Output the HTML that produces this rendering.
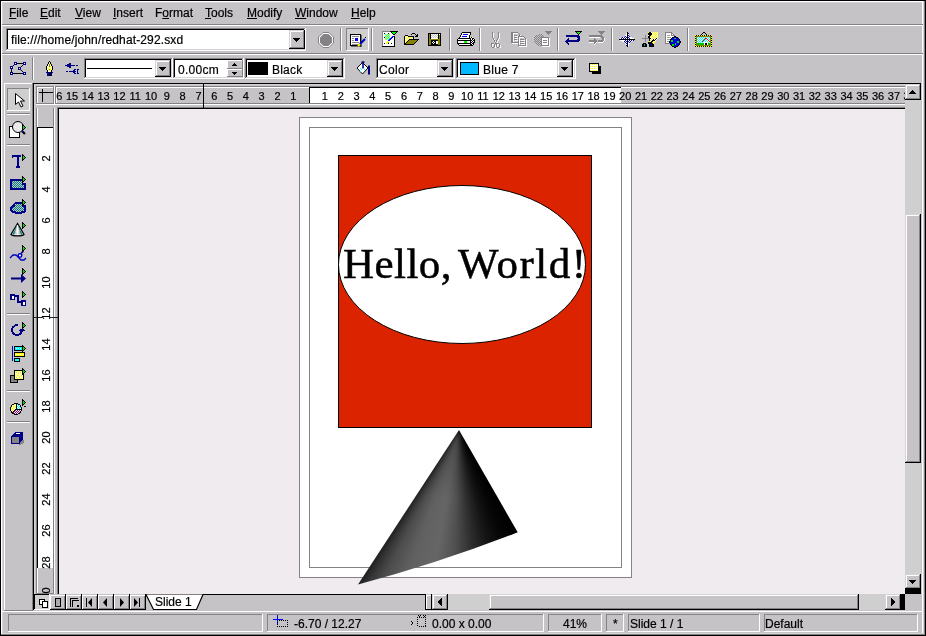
<!DOCTYPE html>
<html><head><meta charset="utf-8">
<style>
*{margin:0;padding:0;box-sizing:border-box}
html,body{width:926px;height:636px;overflow:hidden;background:#c6c3c6}
body{position:relative;font-family:"Liberation Sans",sans-serif;font-size:12px;color:#000}
.a{position:absolute}
.t{position:absolute;white-space:pre;line-height:1;-webkit-text-stroke:0.2px #000}
u{text-decoration:underline;text-underline-offset:1px}
</style></head><body><div class="a" style="left:0;top:0;width:926px;height:636px;will-change:transform">
<div class="a" style="left:0px;top:0px;width:926px;height:636px;background:#c6c3c6;"></div>
<div class="a" style="left:0px;top:0px;width:926px;height:1px;background:#000000;"></div>
<div class="a" style="left:0px;top:0px;width:1px;height:636px;background:#000000;"></div>
<div class="a" style="left:925px;top:0px;width:1px;height:636px;background:#000000;"></div>
<div class="a" style="left:0px;top:635px;width:926px;height:1px;background:#000000;"></div>
<div class="a" style="left:1px;top:1px;width:924px;height:1px;background:#ffffff;"></div>
<div class="a" style="left:1px;top:1px;width:1px;height:634px;background:#ffffff;"></div>
<div class="a" style="left:2px;top:2px;width:921px;height:1px;background:#d6d3d6;"></div>
<div class="a" style="left:2px;top:2px;width:1px;height:631px;background:#d6d3d6;"></div>
<div class="a" style="left:922px;top:2px;width:1px;height:632px;background:#ffffff;"></div>
<div class="a" style="left:923px;top:1px;width:1px;height:634px;background:#d6d3d6;"></div>
<div class="a" style="left:924px;top:1px;width:1px;height:634px;background:#848284;"></div>
<div class="a" style="left:2px;top:633px;width:922px;height:1px;background:#d6d3d6;"></div>
<div class="a" style="left:1px;top:634px;width:924px;height:1px;background:#848284;"></div>
<div class="t" style="left:9px;top:7px;font-size:12px;font-family:'Liberation Sans',sans-serif;"><u>F</u>ile</div>
<div class="t" style="left:40px;top:7px;font-size:12px;font-family:'Liberation Sans',sans-serif;"><u>E</u>dit</div>
<div class="t" style="left:75px;top:7px;font-size:12px;font-family:'Liberation Sans',sans-serif;"><u>V</u>iew</div>
<div class="t" style="left:113px;top:7px;font-size:12px;font-family:'Liberation Sans',sans-serif;"><u>I</u>nsert</div>
<div class="t" style="left:155px;top:7px;font-size:12px;font-family:'Liberation Sans',sans-serif;">F<u>o</u>rmat</div>
<div class="t" style="left:205px;top:7px;font-size:12px;font-family:'Liberation Sans',sans-serif;"><u>T</u>ools</div>
<div class="t" style="left:247px;top:7px;font-size:12px;font-family:'Liberation Sans',sans-serif;"><u>M</u>odify</div>
<div class="t" style="left:295px;top:7px;font-size:12px;font-family:'Liberation Sans',sans-serif;"><u>W</u>indow</div>
<div class="t" style="left:351px;top:7px;font-size:12px;font-family:'Liberation Sans',sans-serif;"><u>H</u>elp</div>
<div class="a" style="left:2px;top:24px;width:921px;height:1px;background:#848284;"></div>
<div class="a" style="left:2px;top:25px;width:921px;height:1px;background:#ffffff;"></div>
<div class="a" style="left:6px;top:28px;width:300px;height:23px;background:#ffffff;"></div>
<div class="a" style="left:6px;top:28px;width:300px;height:1px;background:#848284;"></div>
<div class="a" style="left:6px;top:28px;width:1px;height:23px;background:#848284;"></div>
<div class="a" style="left:6px;top:50px;width:300px;height:1px;background:#ffffff;"></div>
<div class="a" style="left:305px;top:28px;width:1px;height:23px;background:#ffffff;"></div>
<div class="a" style="left:7px;top:29px;width:298px;height:1px;background:#000000;"></div>
<div class="a" style="left:7px;top:29px;width:1px;height:21px;background:#000000;"></div>
<div class="a" style="left:7px;top:49px;width:298px;height:1px;background:#d6d3d6;"></div>
<div class="a" style="left:304px;top:29px;width:1px;height:21px;background:#d6d3d6;"></div>
<div class="t" style="left:11px;top:34px;font-size:12px;font-family:'Liberation Sans',sans-serif;letter-spacing:0.13px">file:///home/john/redhat-292.sxd</div>
<div class="a" style="left:289px;top:30px;width:16px;height:19px;background:#c6c3c6;"></div>
<div class="a" style="left:289px;top:30px;width:16px;height:1px;background:#d6d3d6;"></div>
<div class="a" style="left:289px;top:30px;width:1px;height:19px;background:#d6d3d6;"></div>
<div class="a" style="left:289px;top:48px;width:16px;height:1px;background:#000000;"></div>
<div class="a" style="left:304px;top:30px;width:1px;height:19px;background:#000000;"></div>
<div class="a" style="left:290px;top:31px;width:14px;height:1px;background:#ffffff;"></div>
<div class="a" style="left:290px;top:31px;width:1px;height:17px;background:#ffffff;"></div>
<div class="a" style="left:290px;top:47px;width:14px;height:1px;background:#848284;"></div>
<div class="a" style="left:303px;top:31px;width:1px;height:17px;background:#848284;"></div>
<svg class="a" style="left:293px;top:38px;" width="7" height="4" viewBox="0 0 7 4" shape-rendering="crispEdges"><path d="M0 0h7v1h-1v1h-1v1h-1v1h-1v-1h-1v-1h-1v-1h-1z" fill="#000000"/></svg>
<svg class="a" style="left:318px;top:32px;shape-rendering:auto" width="16" height="16" viewBox="0 0 16 16" shape-rendering="crispEdges"><path d="M5 0.5h6l4.5 4.5v6l-4.5 4.5h-6l-4.5-4.5v-6z" fill="#fff" stroke="#848284"/><path d="M5.5 2h5l3.5 3.5v5l-3.5 3.5h-5l-3.5-3.5v-5z" fill="#848284"/></svg>
<div class="a" style="left:340px;top:28px;width:1px;height:23px;background:#848284;"></div>
<div class="a" style="left:341px;top:28px;width:1px;height:23px;background:#ffffff;"></div>
<div class="a" style="left:346px;top:28px;width:23px;height:23px;background:#cecfce;"></div>
<div class="a" style="left:346px;top:28px;width:23px;height:1px;background:#848284;"></div>
<div class="a" style="left:346px;top:28px;width:1px;height:23px;background:#848284;"></div>
<div class="a" style="left:346px;top:50px;width:23px;height:1px;background:#ffffff;"></div>
<div class="a" style="left:368px;top:28px;width:1px;height:23px;background:#ffffff;"></div>
<svg class="a" style="left:350px;top:34px;shape-rendering:auto" width="17" height="13" viewBox="0 0 17 13" shape-rendering="crispEdges"><rect x="0.5" y="0.5" width="10" height="11" fill="#fff" stroke="#000"/><path d="M11 1v12H1" stroke="#000" fill="none"/><path d="M2 2.5h7M2 4.5h2M2 6.5h2M2 8.5h7M2 10.5h7" stroke="#848284"/><rect x="5" y="4" width="3" height="3" fill="#00f"/><path d="M9 11l6-6" stroke="#00c" stroke-width="2.2"/><path d="M8 12l2-2" stroke="#ff0" stroke-width="2"/><path d="M15 3l1 1" stroke="#000"/></svg>
<div class="a" style="left:371px;top:28px;width:1px;height:23px;background:#848284;"></div>
<div class="a" style="left:372px;top:28px;width:1px;height:23px;background:#ffffff;"></div>
<svg class="a" style="left:382px;top:31px;" width="16" height="16" viewBox="0 0 16 16" shape-rendering="crispEdges"><rect x="0" y="0" width="8" height="1" fill="#848284"/><rect x="8" y="0" width="8" height="1" fill="#000"/><rect x="0" y="1" width="1" height="1" fill="#848284"/><rect x="1" y="1" width="8" height="1" fill="#fff"/><rect x="9" y="1" width="1" height="1" fill="#000"/><rect x="10" y="1" width="4" height="1" fill="#00ff00"/><rect x="14" y="1" width="1" height="1" fill="#000"/><rect x="0" y="2" width="1" height="1" fill="#848284"/><rect x="1" y="2" width="1" height="1" fill="#fff"/><rect x="2" y="2" width="1" height="1" fill="#000"/><rect x="3" y="2" width="3" height="1" fill="#fff"/><rect x="6" y="2" width="1" height="1" fill="#000"/><rect x="7" y="2" width="3" height="1" fill="#fff"/><rect x="10" y="2" width="1" height="1" fill="#000"/><rect x="11" y="2" width="2" height="1" fill="#00ff00"/><rect x="13" y="2" width="1" height="1" fill="#000"/><rect x="0" y="3" width="1" height="1" fill="#848284"/><rect x="1" y="3" width="2" height="1" fill="#fff"/><rect x="3" y="3" width="1" height="1" fill="#00ffff"/><rect x="4" y="3" width="1" height="1" fill="#ffff00"/><rect x="5" y="3" width="1" height="1" fill="#00ffff"/><rect x="6" y="3" width="1" height="1" fill="#ffff00"/><rect x="7" y="3" width="1" height="1" fill="#00ffff"/><rect x="8" y="3" width="3" height="1" fill="#fff"/><rect x="11" y="3" width="2" height="1" fill="#000"/><rect x="0" y="4" width="1" height="1" fill="#848284"/><rect x="1" y="4" width="2" height="1" fill="#fff"/><rect x="3" y="4" width="1" height="1" fill="#ffff00"/><rect x="4" y="4" width="1" height="1" fill="#00ffff"/><rect x="5" y="4" width="1" height="1" fill="#ffff00"/><rect x="6" y="4" width="1" height="1" fill="#00ffff"/><rect x="7" y="4" width="1" height="1" fill="#ffff00"/><rect x="8" y="4" width="4" height="1" fill="#fff"/><rect x="0" y="5" width="1" height="1" fill="#848284"/><rect x="1" y="5" width="2" height="1" fill="#fff"/><rect x="3" y="5" width="1" height="1" fill="#00ffff"/><rect x="4" y="5" width="1" height="1" fill="#ffff00"/><rect x="5" y="5" width="1" height="1" fill="#00ffff"/><rect x="6" y="5" width="1" height="1" fill="#ffff00"/><rect x="7" y="5" width="1" height="1" fill="#00ffff"/><rect x="8" y="5" width="2" height="1" fill="#fff"/><rect x="10" y="5" width="2" height="1" fill="#0000ff"/><rect x="12" y="5" width="1" height="1" fill="#000"/><rect x="0" y="6" width="1" height="1" fill="#848284"/><rect x="1" y="6" width="1" height="1" fill="#fff"/><rect x="2" y="6" width="1" height="1" fill="#000"/><rect x="3" y="6" width="1" height="1" fill="#ffff00"/><rect x="4" y="6" width="1" height="1" fill="#00ffff"/><rect x="5" y="6" width="1" height="1" fill="#ffff00"/><rect x="6" y="6" width="1" height="1" fill="#00ffff"/><rect x="7" y="6" width="1" height="1" fill="#ffff00"/><rect x="8" y="6" width="1" height="1" fill="#fff"/><rect x="9" y="6" width="2" height="1" fill="#0000ff"/><rect x="11" y="6" width="1" height="1" fill="#fff"/><rect x="12" y="6" width="1" height="1" fill="#000"/><rect x="0" y="7" width="1" height="1" fill="#848284"/><rect x="1" y="7" width="2" height="1" fill="#fff"/><rect x="3" y="7" width="1" height="1" fill="#00ffff"/><rect x="4" y="7" width="1" height="1" fill="#ffff00"/><rect x="5" y="7" width="1" height="1" fill="#00ffff"/><rect x="6" y="7" width="1" height="1" fill="#ffff00"/><rect x="7" y="7" width="1" height="1" fill="#00ffff"/><rect x="8" y="7" width="2" height="1" fill="#0000ff"/><rect x="10" y="7" width="2" height="1" fill="#fff"/><rect x="12" y="7" width="1" height="1" fill="#000"/><rect x="0" y="8" width="1" height="1" fill="#848284"/><rect x="1" y="8" width="2" height="1" fill="#fff"/><rect x="3" y="8" width="1" height="1" fill="#ffff00"/><rect x="4" y="8" width="1" height="1" fill="#00ffff"/><rect x="5" y="8" width="1" height="1" fill="#ffff00"/><rect x="6" y="8" width="1" height="1" fill="#00ffff"/><rect x="7" y="8" width="2" height="1" fill="#0000ff"/><rect x="9" y="8" width="3" height="1" fill="#fff"/><rect x="12" y="8" width="1" height="1" fill="#000"/><rect x="0" y="9" width="1" height="1" fill="#848284"/><rect x="1" y="9" width="5" height="1" fill="#fff"/><rect x="6" y="9" width="2" height="1" fill="#0000ff"/><rect x="8" y="9" width="4" height="1" fill="#fff"/><rect x="12" y="9" width="1" height="1" fill="#000"/><rect x="0" y="10" width="1" height="1" fill="#848284"/><rect x="1" y="10" width="4" height="1" fill="#fff"/><rect x="5" y="10" width="2" height="1" fill="#ffff00"/><rect x="7" y="10" width="5" height="1" fill="#fff"/><rect x="12" y="10" width="1" height="1" fill="#000"/><rect x="0" y="11" width="1" height="1" fill="#848284"/><rect x="1" y="11" width="3" height="1" fill="#fff"/><rect x="4" y="11" width="2" height="1" fill="#ffff00"/><rect x="6" y="11" width="1" height="1" fill="#00ff00"/><rect x="7" y="11" width="5" height="1" fill="#fff"/><rect x="12" y="11" width="1" height="1" fill="#000"/><rect x="0" y="12" width="1" height="1" fill="#848284"/><rect x="1" y="12" width="1" height="1" fill="#fff"/><rect x="2" y="12" width="1" height="1" fill="#000"/><rect x="3" y="12" width="1" height="1" fill="#fff"/><rect x="4" y="12" width="1" height="1" fill="#ffff00"/><rect x="5" y="12" width="1" height="1" fill="#fff"/><rect x="6" y="12" width="1" height="1" fill="#000"/><rect x="7" y="12" width="2" height="1" fill="#fff"/><rect x="9" y="12" width="1" height="1" fill="#000"/><rect x="10" y="12" width="2" height="1" fill="#fff"/><rect x="12" y="12" width="1" height="1" fill="#000"/><rect x="0" y="13" width="1" height="1" fill="#848284"/><rect x="1" y="13" width="11" height="1" fill="#fff"/><rect x="12" y="13" width="1" height="1" fill="#000"/><rect x="0" y="14" width="1" height="1" fill="#848284"/><rect x="1" y="14" width="11" height="1" fill="#fff"/><rect x="12" y="14" width="1" height="1" fill="#000"/><rect x="0" y="15" width="13" height="1" fill="#000"/></svg>
<svg class="a" style="left:402px;top:33px;" width="17" height="12" viewBox="0 0 17 12" shape-rendering="crispEdges"><rect x="10" y="0" width="3" height="1" fill="#000"/><rect x="9" y="1" width="1" height="1" fill="#000"/><rect x="13" y="1" width="1" height="1" fill="#000"/><rect x="15" y="1" width="1" height="1" fill="#000"/><rect x="3" y="2" width="3" height="1" fill="#000"/><rect x="14" y="2" width="2" height="1" fill="#000"/><rect x="2" y="3" width="1" height="1" fill="#000"/><rect x="3" y="3" width="1" height="1" fill="#ffff00"/><rect x="4" y="3" width="1" height="1" fill="#fff"/><rect x="5" y="3" width="1" height="1" fill="#ffff00"/><rect x="6" y="3" width="6" height="1" fill="#000"/><rect x="13" y="3" width="3" height="1" fill="#000"/><rect x="2" y="4" width="1" height="1" fill="#000"/><rect x="3" y="4" width="1" height="1" fill="#fff"/><rect x="4" y="4" width="1" height="1" fill="#ffff00"/><rect x="5" y="4" width="1" height="1" fill="#fff"/><rect x="6" y="4" width="1" height="1" fill="#ffff00"/><rect x="7" y="4" width="1" height="1" fill="#fff"/><rect x="8" y="4" width="1" height="1" fill="#ffff00"/><rect x="9" y="4" width="1" height="1" fill="#fff"/><rect x="10" y="4" width="1" height="1" fill="#ffff00"/><rect x="11" y="4" width="1" height="1" fill="#000"/><rect x="2" y="5" width="1" height="1" fill="#000"/><rect x="3" y="5" width="1" height="1" fill="#ffff00"/><rect x="4" y="5" width="1" height="1" fill="#fff"/><rect x="5" y="5" width="1" height="1" fill="#ffff00"/><rect x="6" y="5" width="1" height="1" fill="#fff"/><rect x="7" y="5" width="1" height="1" fill="#ffff00"/><rect x="8" y="5" width="1" height="1" fill="#fff"/><rect x="9" y="5" width="1" height="1" fill="#ffff00"/><rect x="10" y="5" width="1" height="1" fill="#fff"/><rect x="11" y="5" width="1" height="1" fill="#000"/><rect x="2" y="6" width="1" height="1" fill="#000"/><rect x="3" y="6" width="1" height="1" fill="#fff"/><rect x="4" y="6" width="1" height="1" fill="#ffff00"/><rect x="5" y="6" width="1" height="1" fill="#fff"/><rect x="6" y="6" width="1" height="1" fill="#ffff00"/><rect x="7" y="6" width="10" height="1" fill="#000"/><rect x="2" y="7" width="1" height="1" fill="#000"/><rect x="3" y="7" width="1" height="1" fill="#ffff00"/><rect x="4" y="7" width="1" height="1" fill="#fff"/><rect x="5" y="7" width="1" height="1" fill="#ffff00"/><rect x="6" y="7" width="1" height="1" fill="#000"/><rect x="7" y="7" width="8" height="1" fill="#848200"/><rect x="15" y="7" width="1" height="1" fill="#000"/><rect x="2" y="8" width="1" height="1" fill="#000"/><rect x="3" y="8" width="1" height="1" fill="#fff"/><rect x="4" y="8" width="1" height="1" fill="#ffff00"/><rect x="5" y="8" width="1" height="1" fill="#000"/><rect x="6" y="8" width="8" height="1" fill="#848200"/><rect x="14" y="8" width="1" height="1" fill="#000"/><rect x="2" y="9" width="1" height="1" fill="#000"/><rect x="3" y="9" width="1" height="1" fill="#ffff00"/><rect x="4" y="9" width="1" height="1" fill="#000"/><rect x="5" y="9" width="8" height="1" fill="#848200"/><rect x="13" y="9" width="1" height="1" fill="#000"/><rect x="2" y="10" width="2" height="1" fill="#000"/><rect x="4" y="10" width="8" height="1" fill="#848200"/><rect x="12" y="10" width="1" height="1" fill="#000"/><rect x="2" y="11" width="10" height="1" fill="#000"/></svg>
<svg class="a" style="left:425px;top:33px;" width="16" height="13" viewBox="0 0 16 13" shape-rendering="crispEdges"><rect x="3" y="0" width="13" height="1" fill="#000"/><rect x="3" y="1" width="1" height="1" fill="#000"/><rect x="4" y="1" width="1" height="1" fill="#848200"/><rect x="5" y="1" width="1" height="1" fill="#000"/><rect x="6" y="1" width="1" height="1" fill="#fff"/><rect x="7" y="1" width="1" height="1" fill="#c6c3c6"/><rect x="8" y="1" width="1" height="1" fill="#fff"/><rect x="9" y="1" width="1" height="1" fill="#c6c3c6"/><rect x="10" y="1" width="1" height="1" fill="#fff"/><rect x="11" y="1" width="1" height="1" fill="#c6c3c6"/><rect x="12" y="1" width="1" height="1" fill="#fff"/><rect x="13" y="1" width="1" height="1" fill="#000"/><rect x="14" y="1" width="1" height="1" fill="#fff"/><rect x="15" y="1" width="1" height="1" fill="#000"/><rect x="3" y="2" width="1" height="1" fill="#000"/><rect x="4" y="2" width="1" height="1" fill="#848200"/><rect x="5" y="2" width="1" height="1" fill="#000"/><rect x="6" y="2" width="1" height="1" fill="#c6c3c6"/><rect x="7" y="2" width="1" height="1" fill="#fff"/><rect x="8" y="2" width="1" height="1" fill="#c6c3c6"/><rect x="9" y="2" width="1" height="1" fill="#fff"/><rect x="10" y="2" width="1" height="1" fill="#c6c3c6"/><rect x="11" y="2" width="1" height="1" fill="#fff"/><rect x="12" y="2" width="1" height="1" fill="#c6c3c6"/><rect x="13" y="2" width="1" height="1" fill="#000"/><rect x="14" y="2" width="1" height="1" fill="#848200"/><rect x="15" y="2" width="1" height="1" fill="#000"/><rect x="3" y="3" width="1" height="1" fill="#000"/><rect x="4" y="3" width="1" height="1" fill="#848200"/><rect x="5" y="3" width="1" height="1" fill="#000"/><rect x="6" y="3" width="1" height="1" fill="#fff"/><rect x="7" y="3" width="1" height="1" fill="#c6c3c6"/><rect x="8" y="3" width="1" height="1" fill="#fff"/><rect x="9" y="3" width="1" height="1" fill="#c6c3c6"/><rect x="10" y="3" width="1" height="1" fill="#fff"/><rect x="11" y="3" width="1" height="1" fill="#c6c3c6"/><rect x="12" y="3" width="1" height="1" fill="#fff"/><rect x="13" y="3" width="1" height="1" fill="#000"/><rect x="14" y="3" width="1" height="1" fill="#848200"/><rect x="15" y="3" width="1" height="1" fill="#000"/><rect x="3" y="4" width="1" height="1" fill="#000"/><rect x="4" y="4" width="1" height="1" fill="#848200"/><rect x="5" y="4" width="1" height="1" fill="#000"/><rect x="6" y="4" width="1" height="1" fill="#c6c3c6"/><rect x="7" y="4" width="1" height="1" fill="#fff"/><rect x="8" y="4" width="1" height="1" fill="#c6c3c6"/><rect x="9" y="4" width="1" height="1" fill="#fff"/><rect x="10" y="4" width="1" height="1" fill="#c6c3c6"/><rect x="11" y="4" width="1" height="1" fill="#fff"/><rect x="12" y="4" width="1" height="1" fill="#c6c3c6"/><rect x="13" y="4" width="1" height="1" fill="#000"/><rect x="14" y="4" width="1" height="1" fill="#848200"/><rect x="15" y="4" width="1" height="1" fill="#000"/><rect x="3" y="5" width="1" height="1" fill="#000"/><rect x="4" y="5" width="1" height="1" fill="#848200"/><rect x="5" y="5" width="1" height="1" fill="#000"/><rect x="6" y="5" width="7" height="1" fill="#fff"/><rect x="13" y="5" width="1" height="1" fill="#000"/><rect x="14" y="5" width="1" height="1" fill="#848200"/><rect x="15" y="5" width="1" height="1" fill="#000"/><rect x="3" y="6" width="1" height="1" fill="#000"/><rect x="4" y="6" width="11" height="1" fill="#848200"/><rect x="15" y="6" width="1" height="1" fill="#000"/><rect x="3" y="7" width="1" height="1" fill="#000"/><rect x="4" y="7" width="2" height="1" fill="#848200"/><rect x="6" y="7" width="7" height="1" fill="#000"/><rect x="13" y="7" width="2" height="1" fill="#848200"/><rect x="15" y="7" width="1" height="1" fill="#000"/><rect x="3" y="8" width="1" height="1" fill="#000"/><rect x="4" y="8" width="2" height="1" fill="#848200"/><rect x="6" y="8" width="2" height="1" fill="#000"/><rect x="8" y="8" width="1" height="1" fill="#fff"/><rect x="9" y="8" width="2" height="1" fill="#000"/><rect x="11" y="8" width="2" height="1" fill="#fff"/><rect x="13" y="8" width="2" height="1" fill="#848200"/><rect x="15" y="8" width="1" height="1" fill="#000"/><rect x="3" y="9" width="1" height="1" fill="#000"/><rect x="4" y="9" width="2" height="1" fill="#848200"/><rect x="6" y="9" width="1" height="1" fill="#000"/><rect x="7" y="9" width="1" height="1" fill="#fff"/><rect x="8" y="9" width="1" height="1" fill="#000"/><rect x="9" y="9" width="1" height="1" fill="#fff"/><rect x="10" y="9" width="1" height="1" fill="#000"/><rect x="11" y="9" width="2" height="1" fill="#fff"/><rect x="13" y="9" width="2" height="1" fill="#848200"/><rect x="15" y="9" width="1" height="1" fill="#000"/><rect x="3" y="10" width="1" height="1" fill="#000"/><rect x="4" y="10" width="2" height="1" fill="#848200"/><rect x="6" y="10" width="2" height="1" fill="#000"/><rect x="8" y="10" width="1" height="1" fill="#fff"/><rect x="9" y="10" width="2" height="1" fill="#000"/><rect x="11" y="10" width="2" height="1" fill="#fff"/><rect x="13" y="10" width="2" height="1" fill="#848200"/><rect x="15" y="10" width="1" height="1" fill="#000"/><rect x="3" y="11" width="1" height="1" fill="#000"/><rect x="4" y="11" width="2" height="1" fill="#848200"/><rect x="6" y="11" width="7" height="1" fill="#000"/><rect x="13" y="11" width="2" height="1" fill="#848200"/><rect x="15" y="11" width="1" height="1" fill="#000"/><rect x="3" y="12" width="13" height="1" fill="#000"/></svg>
<div class="a" style="left:449px;top:28px;width:1px;height:23px;background:#848284;"></div>
<div class="a" style="left:450px;top:28px;width:1px;height:23px;background:#ffffff;"></div>
<svg class="a" style="left:457px;top:32px;" width="18" height="14" viewBox="0 0 18 14" shape-rendering="crispEdges"><rect x="5" y="0" width="9" height="1" fill="#000"/><rect x="4" y="1" width="1" height="1" fill="#000"/><rect x="5" y="1" width="8" height="1" fill="#fff"/><rect x="13" y="1" width="1" height="1" fill="#000"/><rect x="4" y="2" width="1" height="1" fill="#000"/><rect x="5" y="2" width="1" height="1" fill="#fff"/><rect x="6" y="2" width="5" height="1" fill="#0000ff"/><rect x="11" y="2" width="2" height="1" fill="#fff"/><rect x="13" y="2" width="1" height="1" fill="#000"/><rect x="3" y="3" width="1" height="1" fill="#000"/><rect x="4" y="3" width="8" height="1" fill="#fff"/><rect x="12" y="3" width="1" height="1" fill="#000"/><rect x="3" y="4" width="1" height="1" fill="#000"/><rect x="4" y="4" width="1" height="1" fill="#fff"/><rect x="5" y="4" width="5" height="1" fill="#0000ff"/><rect x="10" y="4" width="2" height="1" fill="#fff"/><rect x="12" y="4" width="1" height="1" fill="#000"/><rect x="2" y="5" width="1" height="1" fill="#000"/><rect x="3" y="5" width="9" height="1" fill="#fff"/><rect x="12" y="5" width="1" height="1" fill="#000"/><rect x="13" y="5" width="1" height="1" fill="#fff"/><rect x="14" y="5" width="1" height="1" fill="#000"/><rect x="15" y="5" width="1" height="1" fill="#fff"/><rect x="1" y="6" width="13" height="1" fill="#000"/><rect x="14" y="6" width="1" height="1" fill="#fff"/><rect x="15" y="6" width="2" height="1" fill="#000"/><rect x="0" y="7" width="1" height="1" fill="#000"/><rect x="1" y="7" width="12" height="1" fill="#fff"/><rect x="13" y="7" width="1" height="1" fill="#000"/><rect x="14" y="7" width="1" height="1" fill="#fff"/><rect x="15" y="7" width="1" height="1" fill="#000"/><rect x="16" y="7" width="1" height="1" fill="#fff"/><rect x="17" y="7" width="1" height="1" fill="#000"/><rect x="0" y="8" width="15" height="1" fill="#000"/><rect x="15" y="8" width="1" height="1" fill="#fff"/><rect x="16" y="8" width="2" height="1" fill="#000"/><rect x="0" y="9" width="1" height="1" fill="#000"/><rect x="1" y="9" width="6" height="1" fill="#fff"/><rect x="7" y="9" width="3" height="1" fill="#00ff00"/><rect x="10" y="9" width="3" height="1" fill="#fff"/><rect x="13" y="9" width="1" height="1" fill="#000"/><rect x="14" y="9" width="1" height="1" fill="#fff"/><rect x="15" y="9" width="1" height="1" fill="#000"/><rect x="16" y="9" width="1" height="1" fill="#fff"/><rect x="17" y="9" width="1" height="1" fill="#000"/><rect x="0" y="10" width="1" height="1" fill="#000"/><rect x="1" y="10" width="6" height="1" fill="#fff"/><rect x="7" y="10" width="3" height="1" fill="#00ff00"/><rect x="10" y="10" width="3" height="1" fill="#fff"/><rect x="13" y="10" width="2" height="1" fill="#000"/><rect x="15" y="10" width="1" height="1" fill="#fff"/><rect x="16" y="10" width="2" height="1" fill="#000"/><rect x="0" y="11" width="14" height="1" fill="#000"/><rect x="14" y="11" width="1" height="1" fill="#fff"/><rect x="15" y="11" width="2" height="1" fill="#000"/><rect x="1" y="12" width="1" height="1" fill="#000"/><rect x="2" y="12" width="11" height="1" fill="#fff"/><rect x="13" y="12" width="2" height="1" fill="#000"/><rect x="15" y="12" width="1" height="1" fill="#fff"/><rect x="16" y="12" width="1" height="1" fill="#000"/><rect x="2" y="13" width="14" height="1" fill="#000"/></svg>
<div class="a" style="left:479px;top:28px;width:1px;height:23px;background:#848284;"></div>
<div class="a" style="left:480px;top:28px;width:1px;height:23px;background:#ffffff;"></div>
<svg class="a" style="left:491px;top:32px;" width="12" height="16" viewBox="0 0 12 16" shape-rendering="crispEdges"><g transform="translate(1,1)" fill="#fff"><path d="M1 0h1v6h1v2h1v2h1v2H4V10H3V8H2V6H1z"/><path d="M1 0h1v1H1z"/><path d="M7 0h1v6H7v2H6v2H5V8h1V6h1z"/><path d="M0 11h3v1h1v3H3v1H1v-1H0zM1 12v3h2v-3z"/><path d="M5 11h3v1h1v3H8v1H6v-1H5zM6 12v3h2v-3z"/></g><g fill="#848284"><path d="M1 0h1v6h1v2h1v2h1v2H4V10H3V8H2V6H1z"/><path d="M1 0h1v1H1z"/><path d="M7 0h1v6H7v2H6v2H5V8h1V6h1z"/><path d="M0 11h3v1h1v3H3v1H1v-1H0zM1 12v3h2v-3z"/><path d="M5 11h3v1h1v3H8v1H6v-1H5zM6 12v3h2v-3z"/></g></svg>
<svg class="a" style="left:511px;top:32px;" width="18" height="15" viewBox="0 0 18 15" shape-rendering="crispEdges"><g transform="translate(1,1)" fill="#fff"><path d="M0 0h7v1h1v1h1v3H8V2H7V1H2v9h5v1H0z"/><path d="M3 3h3v1H3zM3 5h3v1H3zM3 7h3v1H3z"/><path d="M7 4h6v1h1v1h1v8H7zM8 5v8h6V6h-1V5z"/><path d="M9 7h4v1H9zM9 9h4v1H9zM9 11h4v1H9z"/></g><g fill="#848284"><path d="M0 0h7v1h1v1h1v3H8V2H7V1H2v9h5v1H0z"/><path d="M3 3h3v1H3zM3 5h3v1H3zM3 7h3v1H3z"/><path d="M7 4h6v1h1v1h1v8H7zM8 5v8h6V6h-1V5z"/><path d="M9 7h4v1H9zM9 9h4v1H9zM9 11h4v1H9z"/></g></svg>
<svg class="a" style="left:534px;top:31px;" width="18" height="16" viewBox="0 0 18 16" shape-rendering="crispEdges"><defs><pattern id="dthp" width="2" height="2" patternUnits="userSpaceOnUse"><rect width="2" height="2" fill="#c6c3c6"/><rect width="1" height="1" fill="#848284"/><rect x="1" y="1" width="1" height="1" fill="#848284"/></pattern></defs><path d="M11 0h7l-3.5 4z" fill="#848284"/><path d="M4 3h4v1h2v1h1v2H8v8H4v-1H2v-1H1v-2H0V6h1V5h1V4h2z" fill="url(#dthp)"/><path d="M8 7h8v9H8z" fill="#fff"/><path d="M7 6h8v9H7zM8 7v7h6V7z" fill="#848284"/><path d="M9 9h4v1H9zM9 11h4v1H9z" fill="#848284"/></svg>
<div class="a" style="left:557px;top:28px;width:1px;height:23px;background:#848284;"></div>
<div class="a" style="left:558px;top:28px;width:1px;height:23px;background:#ffffff;"></div>
<svg class="a" style="left:565px;top:31px;" width="18" height="14" viewBox="0 0 18 14" shape-rendering="crispEdges"><rect x="10" y="0" width="7" height="1" fill="#000"/><rect x="11" y="1" width="1" height="1" fill="#000"/><rect x="12" y="1" width="3" height="1" fill="#00ff00"/><rect x="15" y="1" width="1" height="1" fill="#000"/><rect x="12" y="2" width="1" height="1" fill="#000"/><rect x="13" y="2" width="1" height="1" fill="#00ff00"/><rect x="14" y="2" width="1" height="1" fill="#000"/><rect x="13" y="3" width="1" height="1" fill="#000"/><rect x="1" y="4" width="13" height="1" fill="#000084"/><rect x="1" y="5" width="14" height="1" fill="#000084"/><rect x="12" y="6" width="3" height="1" fill="#000084"/><rect x="3" y="7" width="1" height="1" fill="#000084"/><rect x="13" y="7" width="2" height="1" fill="#000084"/><rect x="2" y="8" width="2" height="1" fill="#000084"/><rect x="12" y="8" width="3" height="1" fill="#000084"/><rect x="1" y="9" width="14" height="1" fill="#000084"/><rect x="0" y="10" width="14" height="1" fill="#000084"/><rect x="1" y="11" width="2" height="1" fill="#000084"/><rect x="2" y="12" width="2" height="1" fill="#000084"/><rect x="3" y="13" width="1" height="1" fill="#000084"/></svg>
<svg class="a" style="left:589px;top:31px;" width="17" height="14" viewBox="0 0 17 14" shape-rendering="crispEdges"><rect x="9" y="0" width="7" height="1" fill="#848284"/><rect x="10" y="1" width="5" height="1" fill="#848284"/><rect x="11" y="2" width="3" height="1" fill="#848284"/><rect x="12" y="3" width="1" height="1" fill="#848284"/><rect x="0" y="4" width="13" height="1" fill="#848284"/><rect x="0" y="5" width="14" height="1" fill="#848284"/><rect x="0" y="6" width="11" height="1" fill="#fff"/><rect x="12" y="6" width="3" height="1" fill="#848284"/><rect x="5" y="7" width="1" height="1" fill="#848284"/><rect x="13" y="7" width="2" height="1" fill="#848284"/><rect x="15" y="7" width="1" height="1" fill="#fff"/><rect x="5" y="8" width="2" height="1" fill="#848284"/><rect x="13" y="8" width="2" height="1" fill="#848284"/><rect x="15" y="8" width="1" height="1" fill="#fff"/><rect x="0" y="9" width="8" height="1" fill="#848284"/><rect x="9" y="9" width="6" height="1" fill="#848284"/><rect x="15" y="9" width="1" height="1" fill="#fff"/><rect x="0" y="10" width="8" height="1" fill="#848284"/><rect x="9" y="10" width="5" height="1" fill="#848284"/><rect x="14" y="10" width="1" height="1" fill="#fff"/><rect x="0" y="11" width="5" height="1" fill="#fff"/><rect x="5" y="11" width="2" height="1" fill="#848284"/><rect x="7" y="11" width="1" height="1" fill="#fff"/><rect x="9" y="11" width="5" height="1" fill="#fff"/><rect x="5" y="12" width="1" height="1" fill="#848284"/><rect x="6" y="12" width="1" height="1" fill="#fff"/><rect x="5" y="13" width="1" height="1" fill="#fff"/></svg>
<div class="a" style="left:611px;top:28px;width:1px;height:23px;background:#848284;"></div>
<div class="a" style="left:612px;top:28px;width:1px;height:23px;background:#ffffff;"></div>
<svg class="a" style="left:618px;top:31px;shape-rendering:crispEdges" width="18" height="17" viewBox="0 0 18 17" shape-rendering="crispEdges"><defs><pattern id="dthn" width="2" height="2" patternUnits="userSpaceOnUse"><rect width="2" height="2" fill="#fff"/><rect width="1" height="1" fill="#0000c0"/><rect x="1" y="1" width="1" height="1" fill="#0000c0"/></pattern></defs><path d="M9 1L9 8L5.5 8z M17 8L10 8L10 4.5z M10 16L10 9L13.5 9z M1 9L9 9L9 12.5z" fill="#fff"/><path d="M10 1L10 8L13 8z M17 9L10 9L10 12.5z M9 16L9 9L5.5 9z M1 8L9 8L9 4.5z" fill="url(#dthn)"/><path d="M9 1h1v15H9zM1 8h16v1H1z" fill="#000"/></svg>
<svg class="a" style="left:641px;top:31px;shape-rendering:crispEdges" width="18" height="17" viewBox="0 0 18 17" shape-rendering="crispEdges"><defs><pattern id="dthy" width="2" height="2" patternUnits="userSpaceOnUse"><rect width="2" height="2" fill="#fff"/><rect width="1" height="1" fill="#ff0"/><rect x="1" y="1" width="1" height="1" fill="#ff0"/></pattern></defs><path d="M7 1h10v6l-4 6H8z" fill="url(#dthy)"/><path d="M8 1h2v1h1v2h-1v1H9v2h1v1h-1v2H8v1h2v-1h1V9h1V8h1v1h1V8h1V7h1v1h-1v1h-1v1h-2v1h-1v1H9v1H7v-2h1V8H7V5h1V4H7V2h1z" fill="#000"/><path d="M4 4h1v3h3v1H5v3H4V8H1V7h3z" fill="#848284"/><path d="M2 12h3v1h1v3H1v-3h1z" fill="#000"/><rect x="3" y="13" width="1" height="2" fill="#00a0a0"/><path d="M9 12h3v1h1v3H8v-3h1z" fill="#000"/><rect x="10" y="13" width="1" height="2" fill="#0000c0"/></svg>
<svg class="a" style="left:665px;top:32px;shape-rendering:crispEdges" width="16" height="16" viewBox="0 0 16 16" shape-rendering="crispEdges"><path d="M0.5 0.5h6l2.5 2.5v8.5h-9z" fill="#fff" stroke="#848284"/><path d="M6.5 0.5v3h3" fill="none" stroke="#848284"/><path d="M2 3h3M2 5h4M2 7h4M2 9h3" stroke="#a0a0a0"/><circle cx="10" cy="10" r="5.2" fill="#0000e0" stroke="#000" stroke-width="1"/><path d="M6 8h2v2H6zM9 6h2v1H9zM12 9h2v2h-2zM7 12h2v2H7zM10 11h1v2h-1z" fill="#00e000"/></svg>
<div class="a" style="left:687px;top:28px;width:1px;height:23px;background:#848284;"></div>
<div class="a" style="left:688px;top:28px;width:1px;height:23px;background:#ffffff;"></div>
<svg class="a" style="left:695px;top:31px;shape-rendering:crispEdges" width="18" height="17" viewBox="0 0 18 17" shape-rendering="crispEdges"><defs><pattern id="dthc" width="2" height="2" patternUnits="userSpaceOnUse"><rect width="2" height="2" fill="#fff"/><rect width="1" height="1" fill="#0ff"/><rect x="1" y="1" width="1" height="1" fill="#0ff"/></pattern><pattern id="dthf" width="2" height="2" patternUnits="userSpaceOnUse"><rect width="2" height="2" fill="#000"/><rect width="1" height="1" fill="#ff0"/><rect x="1" y="1" width="1" height="1" fill="#ff0"/></pattern></defs><path d="M6 4l3-3 3 3" stroke="#000" fill="none"/><rect x="0" y="4" width="17" height="12" fill="url(#dthf)"/><rect x="1" y="5" width="15" height="10" fill="#848200"/><rect x="2" y="6" width="13" height="8" fill="url(#dthc)"/><path d="M2 12h13v2H2z" fill="#00c000"/><path d="M9 11h4v3H9z" fill="#fff"/><path d="M10 12h2v2h-2z" fill="#000"/><path d="M7 11l4-4 4 4" stroke="#f00" stroke-width="1.4" fill="none"/></svg>
<div class="a" style="left:2px;top:53px;width:921px;height:1px;background:#848284;"></div>
<div class="a" style="left:2px;top:54px;width:921px;height:1px;background:#ffffff;"></div>
<svg class="a" style="left:10px;top:62px;" width="16" height="13" viewBox="0 0 16 13" shape-rendering="crispEdges"><path d="M7 1h6v1H7zM3 3h1v1H3zM1 7h1v3H1zM3 11h10v1H3zM12 3h1v1h-1zM11 4h1v1h-1zM11 8h1v1h-1zM12 9h1v1h-1z" fill="#000"/><path d="M4 0h3v3H4zM13 0h3v3h-3zM0 4h3v3H0zM8 5h3v3H8zM0 10h3v3H0zM13 10h3v3h-3z" fill="#000084"/><path d="M5 1h1v1H5zM14 1h1v1h-1zM1 5h1v1H1zM9 6h1v1H9zM1 11h1v1H1zM14 11h1v1h-1z" fill="#fff"/></svg>
<div class="a" style="left:32px;top:57px;width:1px;height:23px;background:#848284;"></div>
<div class="a" style="left:33px;top:57px;width:1px;height:23px;background:#ffffff;"></div>
<svg class="a" style="left:46px;top:61px;" width="7" height="15" viewBox="0 0 7 15" shape-rendering="crispEdges"><rect x="3" y="0" width="1" height="1" fill="#000"/><rect x="2" y="1" width="1" height="1" fill="#000"/><rect x="3" y="1" width="1" height="1" fill="#ffff00"/><rect x="4" y="1" width="1" height="1" fill="#000"/><rect x="2" y="2" width="1" height="1" fill="#000"/><rect x="3" y="2" width="1" height="1" fill="#fff"/><rect x="4" y="2" width="1" height="1" fill="#000"/><rect x="1" y="3" width="1" height="1" fill="#000"/><rect x="2" y="3" width="1" height="1" fill="#ffff00"/><rect x="3" y="3" width="1" height="1" fill="#848284"/><rect x="4" y="3" width="1" height="1" fill="#ffff00"/><rect x="5" y="3" width="1" height="1" fill="#000"/><rect x="1" y="4" width="1" height="1" fill="#000"/><rect x="2" y="4" width="1" height="1" fill="#fff"/><rect x="3" y="4" width="1" height="1" fill="#848284"/><rect x="4" y="4" width="1" height="1" fill="#fff"/><rect x="5" y="4" width="1" height="1" fill="#000"/><rect x="0" y="5" width="1" height="1" fill="#000"/><rect x="1" y="5" width="1" height="1" fill="#fff"/><rect x="2" y="5" width="1" height="1" fill="#ffff00"/><rect x="3" y="5" width="1" height="1" fill="#848284"/><rect x="4" y="5" width="1" height="1" fill="#ffff00"/><rect x="5" y="5" width="1" height="1" fill="#fff"/><rect x="6" y="5" width="1" height="1" fill="#000"/><rect x="0" y="6" width="1" height="1" fill="#000"/><rect x="1" y="6" width="1" height="1" fill="#ffff00"/><rect x="2" y="6" width="1" height="1" fill="#fff"/><rect x="3" y="6" width="1" height="1" fill="#ffff00"/><rect x="4" y="6" width="1" height="1" fill="#fff"/><rect x="5" y="6" width="1" height="1" fill="#ffff00"/><rect x="6" y="6" width="1" height="1" fill="#000"/><rect x="0" y="7" width="1" height="1" fill="#000"/><rect x="1" y="7" width="1" height="1" fill="#fff"/><rect x="2" y="7" width="1" height="1" fill="#ffff00"/><rect x="3" y="7" width="1" height="1" fill="#fff"/><rect x="4" y="7" width="1" height="1" fill="#ffff00"/><rect x="5" y="7" width="1" height="1" fill="#fff"/><rect x="6" y="7" width="1" height="1" fill="#000"/><rect x="0" y="8" width="1" height="1" fill="#000"/><rect x="1" y="8" width="1" height="1" fill="#fff"/><rect x="2" y="8" width="1" height="1" fill="#ffff00"/><rect x="3" y="8" width="1" height="1" fill="#848284"/><rect x="4" y="8" width="1" height="1" fill="#ffff00"/><rect x="5" y="8" width="1" height="1" fill="#fff"/><rect x="6" y="8" width="1" height="1" fill="#000"/><rect x="1" y="9" width="1" height="1" fill="#000"/><rect x="2" y="9" width="1" height="1" fill="#fff"/><rect x="3" y="9" width="1" height="1" fill="#ffff00"/><rect x="4" y="9" width="1" height="1" fill="#fff"/><rect x="5" y="9" width="1" height="1" fill="#000"/><rect x="1" y="10" width="1" height="1" fill="#000"/><rect x="2" y="10" width="2" height="1" fill="#fff"/><rect x="4" y="10" width="1" height="1" fill="#ffff00"/><rect x="5" y="10" width="1" height="1" fill="#000"/><rect x="0" y="11" width="7" height="1" fill="#000084"/><rect x="1" y="12" width="2" height="1" fill="#000084"/><rect x="3" y="12" width="2" height="1" fill="#000"/><rect x="5" y="12" width="1" height="1" fill="#000084"/><rect x="1" y="13" width="2" height="1" fill="#000084"/><rect x="3" y="13" width="2" height="1" fill="#000"/><rect x="5" y="13" width="1" height="1" fill="#000084"/><rect x="1" y="14" width="2" height="1" fill="#000084"/><rect x="3" y="14" width="2" height="1" fill="#000"/><rect x="5" y="14" width="1" height="1" fill="#000084"/></svg>
<svg class="a" style="left:62px;top:63px;" width="17" height="11" viewBox="0 0 17 11" shape-rendering="crispEdges"><rect x="7" y="0" width="2" height="1" fill="#000084"/><rect x="5" y="1" width="4" height="1" fill="#000084"/><rect x="3" y="2" width="10" height="1" fill="#000084"/><rect x="14" y="2" width="2" height="1" fill="#000084"/><rect x="5" y="3" width="4" height="1" fill="#000084"/><rect x="7" y="4" width="2" height="1" fill="#000084"/><rect x="12" y="6" width="2" height="1" fill="#000084"/><rect x="15" y="6" width="2" height="1" fill="#000084"/><rect x="11" y="7" width="2" height="1" fill="#000084"/><rect x="15" y="7" width="1" height="1" fill="#000084"/><rect x="4" y="8" width="2" height="1" fill="#000084"/><rect x="7" y="8" width="7" height="1" fill="#000084"/><rect x="15" y="8" width="1" height="1" fill="#000084"/><rect x="11" y="9" width="2" height="1" fill="#000084"/><rect x="15" y="9" width="1" height="1" fill="#000084"/><rect x="12" y="10" width="2" height="1" fill="#000084"/><rect x="15" y="10" width="2" height="1" fill="#000084"/></svg>
<div class="a" style="left:84px;top:58px;width:89px;height:21px;background:#ffffff;"></div>
<div class="a" style="left:84px;top:58px;width:89px;height:1px;background:#848284;"></div>
<div class="a" style="left:84px;top:58px;width:1px;height:21px;background:#848284;"></div>
<div class="a" style="left:84px;top:78px;width:89px;height:1px;background:#ffffff;"></div>
<div class="a" style="left:172px;top:58px;width:1px;height:21px;background:#ffffff;"></div>
<div class="a" style="left:85px;top:59px;width:87px;height:1px;background:#000000;"></div>
<div class="a" style="left:85px;top:59px;width:1px;height:19px;background:#000000;"></div>
<div class="a" style="left:85px;top:77px;width:87px;height:1px;background:#d6d3d6;"></div>
<div class="a" style="left:171px;top:59px;width:1px;height:19px;background:#d6d3d6;"></div>
<div class="a" style="left:87px;top:68px;width:65px;height:1px;background:#000000;"></div>
<div class="a" style="left:155px;top:60px;width:16px;height:17px;background:#c6c3c6;"></div>
<div class="a" style="left:155px;top:60px;width:16px;height:1px;background:#d6d3d6;"></div>
<div class="a" style="left:155px;top:60px;width:1px;height:17px;background:#d6d3d6;"></div>
<div class="a" style="left:155px;top:76px;width:16px;height:1px;background:#000000;"></div>
<div class="a" style="left:170px;top:60px;width:1px;height:17px;background:#000000;"></div>
<div class="a" style="left:156px;top:61px;width:14px;height:1px;background:#ffffff;"></div>
<div class="a" style="left:156px;top:61px;width:1px;height:15px;background:#ffffff;"></div>
<div class="a" style="left:156px;top:75px;width:14px;height:1px;background:#848284;"></div>
<div class="a" style="left:169px;top:61px;width:1px;height:15px;background:#848284;"></div>
<svg class="a" style="left:159px;top:67px;" width="7" height="4" viewBox="0 0 7 4" shape-rendering="crispEdges"><path d="M0 0h7v1h-1v1h-1v1h-1v1h-1v-1h-1v-1h-1v-1h-1z" fill="#000000"/></svg>
<div class="a" style="left:173px;top:58px;width:71px;height:21px;background:#ffffff;"></div>
<div class="a" style="left:173px;top:58px;width:71px;height:1px;background:#848284;"></div>
<div class="a" style="left:173px;top:58px;width:1px;height:21px;background:#848284;"></div>
<div class="a" style="left:173px;top:78px;width:71px;height:1px;background:#ffffff;"></div>
<div class="a" style="left:243px;top:58px;width:1px;height:21px;background:#ffffff;"></div>
<div class="a" style="left:174px;top:59px;width:69px;height:1px;background:#000000;"></div>
<div class="a" style="left:174px;top:59px;width:1px;height:19px;background:#000000;"></div>
<div class="a" style="left:174px;top:77px;width:69px;height:1px;background:#d6d3d6;"></div>
<div class="a" style="left:242px;top:59px;width:1px;height:19px;background:#d6d3d6;"></div>
<div class="t" style="left:178px;top:64px;font-size:12px;font-family:'Liberation Sans',sans-serif;letter-spacing:0.3px">0.00cm</div>
<div class="a" style="left:227px;top:60px;width:16px;height:17px;background:#c6c3c6;"></div>
<div class="a" style="left:227px;top:60px;width:16px;height:1px;background:#ffffff;"></div>
<div class="a" style="left:227px;top:60px;width:1px;height:9px;background:#ffffff;"></div>
<div class="a" style="left:227px;top:68px;width:16px;height:1px;background:#848284;"></div>
<div class="a" style="left:242px;top:60px;width:1px;height:9px;background:#848284;"></div>
<div class="a" style="left:227px;top:69px;width:16px;height:1px;background:#ffffff;"></div>
<div class="a" style="left:227px;top:69px;width:1px;height:8px;background:#ffffff;"></div>
<div class="a" style="left:227px;top:76px;width:16px;height:1px;background:#848284;"></div>
<div class="a" style="left:242px;top:69px;width:1px;height:8px;background:#848284;"></div>
<svg class="a" style="left:232px;top:63px;" width="5" height="3" viewBox="0 0 5 3" shape-rendering="crispEdges"><path d="M2 0h1v1h1v1h1v1H0V2h1V1h1z" fill="#000"/></svg>
<svg class="a" style="left:232px;top:72px;" width="5" height="3" viewBox="0 0 5 3" shape-rendering="crispEdges"><path d="M0 0h5v1H4v1H3v1H2V2H1V1H0z" fill="#000"/></svg>
<div class="a" style="left:245px;top:58px;width:100px;height:21px;background:#ffffff;"></div>
<div class="a" style="left:245px;top:58px;width:100px;height:1px;background:#848284;"></div>
<div class="a" style="left:245px;top:58px;width:1px;height:21px;background:#848284;"></div>
<div class="a" style="left:245px;top:78px;width:100px;height:1px;background:#ffffff;"></div>
<div class="a" style="left:344px;top:58px;width:1px;height:21px;background:#ffffff;"></div>
<div class="a" style="left:246px;top:59px;width:98px;height:1px;background:#000000;"></div>
<div class="a" style="left:246px;top:59px;width:1px;height:19px;background:#000000;"></div>
<div class="a" style="left:246px;top:77px;width:98px;height:1px;background:#d6d3d6;"></div>
<div class="a" style="left:343px;top:59px;width:1px;height:19px;background:#d6d3d6;"></div>
<div class="a" style="left:248px;top:62px;width:20px;height:13px;background:#000000;"></div>
<div class="t" style="left:272px;top:64px;font-size:12px;font-family:'Liberation Sans',sans-serif;letter-spacing:0.2px">Black</div>
<div class="a" style="left:327px;top:60px;width:16px;height:17px;background:#c6c3c6;"></div>
<div class="a" style="left:327px;top:60px;width:16px;height:1px;background:#d6d3d6;"></div>
<div class="a" style="left:327px;top:60px;width:1px;height:17px;background:#d6d3d6;"></div>
<div class="a" style="left:327px;top:76px;width:16px;height:1px;background:#000000;"></div>
<div class="a" style="left:342px;top:60px;width:1px;height:17px;background:#000000;"></div>
<div class="a" style="left:328px;top:61px;width:14px;height:1px;background:#ffffff;"></div>
<div class="a" style="left:328px;top:61px;width:1px;height:15px;background:#ffffff;"></div>
<div class="a" style="left:328px;top:75px;width:14px;height:1px;background:#848284;"></div>
<div class="a" style="left:341px;top:61px;width:1px;height:15px;background:#848284;"></div>
<svg class="a" style="left:331px;top:67px;" width="7" height="4" viewBox="0 0 7 4" shape-rendering="crispEdges"><path d="M0 0h7v1h-1v1h-1v1h-1v1h-1v-1h-1v-1h-1v-1h-1z" fill="#000000"/></svg>
<svg class="a" style="left:356px;top:61px;shape-rendering:auto" width="15" height="15" viewBox="0 0 15 15" shape-rendering="crispEdges"><path d="M6.5 1.5l5.5 5.5-5.5 6-5.5-6z" fill="#fff" stroke="#000"/><path d="M4 7h1v1H4zM7 6h1v1H7zM5 8h1v1H5zM8 8h1v1H8zM4 10h1v1H4z" fill="#0ff"/><path d="M7 0.5v7" stroke="#000084" stroke-width="1.6"/><path d="M5.5 1.5a2 2 0 0 1 3 0" stroke="#000084" stroke-width="1.3" fill="none"/><path d="M13 4.5v9" stroke="#000084" stroke-width="2"/></svg>
<div class="a" style="left:376px;top:58px;width:79px;height:21px;background:#ffffff;"></div>
<div class="a" style="left:376px;top:58px;width:79px;height:1px;background:#848284;"></div>
<div class="a" style="left:376px;top:58px;width:1px;height:21px;background:#848284;"></div>
<div class="a" style="left:376px;top:78px;width:79px;height:1px;background:#ffffff;"></div>
<div class="a" style="left:454px;top:58px;width:1px;height:21px;background:#ffffff;"></div>
<div class="a" style="left:377px;top:59px;width:77px;height:1px;background:#000000;"></div>
<div class="a" style="left:377px;top:59px;width:1px;height:19px;background:#000000;"></div>
<div class="a" style="left:377px;top:77px;width:77px;height:1px;background:#d6d3d6;"></div>
<div class="a" style="left:453px;top:59px;width:1px;height:19px;background:#d6d3d6;"></div>
<div class="t" style="left:379px;top:64px;font-size:12px;font-family:'Liberation Sans',sans-serif;letter-spacing:0.3px">Color</div>
<div class="a" style="left:437px;top:60px;width:16px;height:17px;background:#c6c3c6;"></div>
<div class="a" style="left:437px;top:60px;width:16px;height:1px;background:#d6d3d6;"></div>
<div class="a" style="left:437px;top:60px;width:1px;height:17px;background:#d6d3d6;"></div>
<div class="a" style="left:437px;top:76px;width:16px;height:1px;background:#000000;"></div>
<div class="a" style="left:452px;top:60px;width:1px;height:17px;background:#000000;"></div>
<div class="a" style="left:438px;top:61px;width:14px;height:1px;background:#ffffff;"></div>
<div class="a" style="left:438px;top:61px;width:1px;height:15px;background:#ffffff;"></div>
<div class="a" style="left:438px;top:75px;width:14px;height:1px;background:#848284;"></div>
<div class="a" style="left:451px;top:61px;width:1px;height:15px;background:#848284;"></div>
<svg class="a" style="left:441px;top:67px;" width="7" height="4" viewBox="0 0 7 4" shape-rendering="crispEdges"><path d="M0 0h7v1h-1v1h-1v1h-1v1h-1v-1h-1v-1h-1v-1h-1z" fill="#000000"/></svg>
<div class="a" style="left:456px;top:58px;width:120px;height:21px;background:#ffffff;"></div>
<div class="a" style="left:456px;top:58px;width:120px;height:1px;background:#848284;"></div>
<div class="a" style="left:456px;top:58px;width:1px;height:21px;background:#848284;"></div>
<div class="a" style="left:456px;top:78px;width:120px;height:1px;background:#ffffff;"></div>
<div class="a" style="left:575px;top:58px;width:1px;height:21px;background:#ffffff;"></div>
<div class="a" style="left:457px;top:59px;width:118px;height:1px;background:#000000;"></div>
<div class="a" style="left:457px;top:59px;width:1px;height:19px;background:#000000;"></div>
<div class="a" style="left:457px;top:77px;width:118px;height:1px;background:#d6d3d6;"></div>
<div class="a" style="left:574px;top:59px;width:1px;height:19px;background:#d6d3d6;"></div>
<div class="a" style="left:460px;top:62px;width:19px;height:13px;background:#000000;"></div>
<div class="a" style="left:461px;top:63px;width:17px;height:11px;background:#00b8ff;"></div>
<div class="t" style="left:483px;top:64px;font-size:12px;font-family:'Liberation Sans',sans-serif;letter-spacing:0.3px">Blue 7</div>
<div class="a" style="left:557px;top:60px;width:16px;height:17px;background:#c6c3c6;"></div>
<div class="a" style="left:557px;top:60px;width:16px;height:1px;background:#d6d3d6;"></div>
<div class="a" style="left:557px;top:60px;width:1px;height:17px;background:#d6d3d6;"></div>
<div class="a" style="left:557px;top:76px;width:16px;height:1px;background:#000000;"></div>
<div class="a" style="left:572px;top:60px;width:1px;height:17px;background:#000000;"></div>
<div class="a" style="left:558px;top:61px;width:14px;height:1px;background:#ffffff;"></div>
<div class="a" style="left:558px;top:61px;width:1px;height:15px;background:#ffffff;"></div>
<div class="a" style="left:558px;top:75px;width:14px;height:1px;background:#848284;"></div>
<div class="a" style="left:571px;top:61px;width:1px;height:15px;background:#848284;"></div>
<svg class="a" style="left:561px;top:67px;" width="7" height="4" viewBox="0 0 7 4" shape-rendering="crispEdges"><path d="M0 0h7v1h-1v1h-1v1h-1v1h-1v-1h-1v-1h-1v-1h-1z" fill="#000000"/></svg>
<svg class="a" style="left:589px;top:63px;" width="13" height="12" viewBox="0 0 13 12" shape-rendering="crispEdges"><rect x="3" y="3" width="9" height="8" fill="#000"/><rect x="0" y="0" width="10" height="9" fill="#000"/><rect x="1" y="1" width="8" height="7" fill="#fff"/><path d="M1 1h1v1H1zM3 1h1v1H3zM5 1h1v1H5zM7 1h1v1H7zM1 3h1v1H1zM3 3h1v1H3zM5 3h1v1H5zM7 3h1v1H7zM1 5h1v1H1zM3 5h1v1H3zM5 5h1v1H5zM7 5h1v1H7zM1 7h1v1H1zM3 7h1v1H3zM5 7h1v1H5zM7 7h1v1H7z" fill="#ff0"/></svg>
<div class="a" style="left:4px;top:83px;width:29px;height:1px;background:#ffffff;"></div>
<div class="a" style="left:4px;top:83px;width:1px;height:528px;background:#ffffff;"></div>
<div class="a" style="left:4px;top:610px;width:29px;height:1px;background:#848284;"></div>
<div class="a" style="left:32px;top:83px;width:1px;height:528px;background:#848284;"></div>
<div class="a" style="left:7px;top:88px;width:23px;height:23px;background:#cecfce;"></div>
<div class="a" style="left:7px;top:88px;width:23px;height:1px;background:#848284;"></div>
<div class="a" style="left:7px;top:88px;width:1px;height:23px;background:#848284;"></div>
<div class="a" style="left:7px;top:110px;width:23px;height:1px;background:#ffffff;"></div>
<div class="a" style="left:29px;top:88px;width:1px;height:23px;background:#ffffff;"></div>
<svg class="a" style="left:14px;top:92px;shape-rendering:auto" width="11" height="16" viewBox="0 0 11 16" shape-rendering="crispEdges"><path d="M1.5 1.5v11l3-2.5 2.5 5 2-1-2.5-5h4z" fill="#fff" stroke="#000" stroke-linejoin="miter"/></svg>
<div class="a" style="left:7px;top:113px;width:23px;height:1px;background:#848284;"></div>
<div class="a" style="left:7px;top:114px;width:23px;height:1px;background:#ffffff;"></div>
<svg class="a" style="left:9px;top:121px;shape-rendering:auto" width="19" height="18" viewBox="0 0 19 18" shape-rendering="crispEdges"><rect x="0.5" y="5.5" width="10" height="11" fill="#fff" stroke="#000"/><circle cx="9" cy="6" r="5.5" fill="#e8e8e8" stroke="#000"/><path d="M7 3h1v1H7zM10 4h1v1h-1zM6 6h1v1H6zM9 7h1v1H9zM11 6h1v1h-1z" fill="#fff"/><path d="M13 10l3 3" stroke="#000" stroke-width="2.2"/><path d="M13 10l1 1" stroke="#00f" stroke-width="1.5"/></svg>
<svg class="a" style="left:22px;top:124px;" width="4" height="7" viewBox="0 0 4 7" shape-rendering="crispEdges"><path d="M0 0h1v1h1v1h1v1h1v1H3v1H2v1H1v1H0z" fill="#000"/><path d="M1 2h1v1h1v1H2v1H1z" fill="#00e000"/></svg>
<div class="a" style="left:7px;top:144px;width:23px;height:1px;background:#848284;"></div>
<div class="a" style="left:7px;top:145px;width:23px;height:1px;background:#ffffff;"></div>
<svg class="a" style="left:12px;top:155px;" width="9" height="13" viewBox="0 0 9 13" shape-rendering="crispEdges"><path d="M0 0h9v2H7v9h1v2H4v-2h1V2H1v1H0z" fill="#000084"/></svg>
<svg class="a" style="left:22px;top:154px;" width="4" height="7" viewBox="0 0 4 7" shape-rendering="crispEdges"><path d="M0 0h1v1h1v1h1v1h1v1H3v1H2v1H1v1H0z" fill="#000"/><path d="M1 2h1v1h1v1H2v1H1z" fill="#00e000"/></svg>
<svg class="a" style="left:10px;top:176px;" width="17" height="14" viewBox="0 0 17 14" shape-rendering="crispEdges"><defs><pattern id="dth1" width="2" height="2" patternUnits="userSpaceOnUse"><rect width="2" height="2" fill="#008284"/><rect width="1" height="1" fill="#c6c3c6"/><rect x="1" y="1" width="1" height="1" fill="#c6c3c6"/></pattern></defs><path d="M0 3h12v4h4v7H0z" fill="#000084"/><path d="M2 5h10v4h2v3H2z" fill="url(#dth1)"/></svg>
<svg class="a" style="left:22px;top:176px;" width="4" height="7" viewBox="0 0 4 7" shape-rendering="crispEdges"><path d="M0 0h1v1h1v1h1v1h1v1H3v1H2v1H1v1H0z" fill="#000"/><path d="M1 2h1v1h1v1H2v1H1z" fill="#00e000"/></svg>
<svg class="a" style="left:10px;top:199px;" width="17" height="15" viewBox="0 0 17 15" shape-rendering="crispEdges"><defs><pattern id="dth2" width="2" height="2" patternUnits="userSpaceOnUse"><rect width="2" height="2" fill="#008284"/><rect width="1" height="1" fill="#c6c3c6"/><rect x="1" y="1" width="1" height="1" fill="#c6c3c6"/></pattern></defs><path d="M5 3h7v3h4v6l-2 2h-2l-1 1H5l-1-1H2l-2-2V8l2-2h1z" fill="#000084"/><path d="M5 5h7v3h2v3l-1 1h-2l-1 1H6l-1-1H3l-1-1V9l1-1h1l1-1z" fill="url(#dth2)"/></svg>
<svg class="a" style="left:22px;top:199px;" width="4" height="7" viewBox="0 0 4 7" shape-rendering="crispEdges"><path d="M0 0h1v1h1v1h1v1h1v1H3v1H2v1H1v1H0z" fill="#000"/><path d="M1 2h1v1h1v1H2v1H1z" fill="#00e000"/></svg>
<svg class="a" style="left:10px;top:222px;shape-rendering:auto" width="16" height="16" viewBox="0 0 16 16" shape-rendering="crispEdges"><path d="M7.5 1.5L1 12.5c2 1.8 11 1.8 13 0z" fill="#e0e0e0" stroke="#000" stroke-width="1.2"/><path d="M7.5 2.5L2.5 12c.5.5 1 .7 1.5.9z" fill="#008284"/><path d="M7.5 2.5l5 9.5c-.5.5-1 .7-1.5.9z" fill="#008284"/><path d="M7.5 3v10" stroke="#fff" stroke-width="1.2"/><path d="M5 8l1 4M10 8l-1 4" stroke="#b0b0b0"/></svg>
<svg class="a" style="left:22px;top:222px;" width="4" height="7" viewBox="0 0 4 7" shape-rendering="crispEdges"><path d="M0 0h1v1h1v1h1v1h1v1H3v1H2v1H1v1H0z" fill="#000"/><path d="M1 2h1v1h1v1H2v1H1z" fill="#00e000"/></svg>
<svg class="a" style="left:9px;top:245px;shape-rendering:auto" width="18" height="16" viewBox="0 0 18 16" shape-rendering="crispEdges"><path d="M1 13l3-3h3l3 3 2 2h3l2-2" stroke="#0000c0" stroke-width="1.3" fill="none"/><circle cx="11" cy="10.5" r="1.8" fill="#fff" stroke="#0000c0" stroke-width="1.4"/><path d="M12 8.5l2.5-2.5" stroke="#000084" stroke-width="1.6"/></svg>
<svg class="a" style="left:22px;top:245px;" width="4" height="7" viewBox="0 0 4 7" shape-rendering="crispEdges"><path d="M0 0h1v1h1v1h1v1h1v1H3v1H2v1H1v1H0z" fill="#000"/><path d="M1 2h1v1h1v1H2v1H1z" fill="#00e000"/></svg>
<svg class="a" style="left:10px;top:274px;shape-rendering:auto" width="17" height="9" viewBox="0 0 17 9" shape-rendering="crispEdges"><path d="M1 4.5h12" stroke="#000084" stroke-width="2"/><path d="M11 0l5 4.5-5 4.5z" fill="#000084"/></svg>
<svg class="a" style="left:22px;top:268px;" width="4" height="7" viewBox="0 0 4 7" shape-rendering="crispEdges"><path d="M0 0h1v1h1v1h1v1h1v1H3v1H2v1H1v1H0z" fill="#000"/><path d="M1 2h1v1h1v1H2v1H1z" fill="#00e000"/></svg>
<svg class="a" style="left:10px;top:294px;" width="16" height="12" viewBox="0 0 16 12" shape-rendering="crispEdges"><path d="M0 0h5v6H0z" fill="#000084"/><path d="M2 1.5h2v3H2z" fill="#fff"/><path d="M11 6h5v6h-5z" fill="#000084"/><path d="M12.5 7.5h2v3h-2z" fill="#fff"/><path d="M5 2h3v6h3" stroke="#000084" stroke-width="1.5" fill="none"/></svg>
<svg class="a" style="left:22px;top:291px;" width="4" height="7" viewBox="0 0 4 7" shape-rendering="crispEdges"><path d="M0 0h1v1h1v1h1v1h1v1H3v1H2v1H1v1H0z" fill="#000"/><path d="M1 2h1v1h1v1H2v1H1z" fill="#00e000"/></svg>
<div class="a" style="left:7px;top:313px;width:23px;height:1px;background:#848284;"></div>
<div class="a" style="left:7px;top:314px;width:23px;height:1px;background:#ffffff;"></div>
<svg class="a" style="left:11px;top:324px;" width="15" height="12" viewBox="0 0 15 12" shape-rendering="crispEdges"><rect x="4" y="0" width="3" height="1" fill="#000084"/><rect x="3" y="1" width="4" height="1" fill="#000084"/><rect x="1" y="2" width="3" height="1" fill="#000084"/><rect x="1" y="3" width="2" height="1" fill="#000084"/><rect x="0" y="4" width="2" height="1" fill="#000084"/><rect x="0" y="5" width="2" height="1" fill="#000084"/><rect x="9" y="5" width="4" height="1" fill="#000084"/><rect x="0" y="6" width="2" height="1" fill="#000084"/><rect x="8" y="6" width="6" height="1" fill="#000084"/><rect x="0" y="7" width="2" height="1" fill="#000084"/><rect x="9" y="7" width="3" height="1" fill="#000084"/><rect x="1" y="8" width="2" height="1" fill="#000084"/><rect x="9" y="8" width="2" height="1" fill="#000084"/><rect x="1" y="9" width="3" height="1" fill="#000084"/><rect x="8" y="9" width="3" height="1" fill="#000084"/><rect x="2" y="10" width="8" height="1" fill="#000084"/><rect x="4" y="11" width="4" height="1" fill="#000084"/></svg>
<svg class="a" style="left:22px;top:322px;" width="4" height="7" viewBox="0 0 4 7" shape-rendering="crispEdges"><path d="M0 0h1v1h1v1h1v1h1v1H3v1H2v1H1v1H0z" fill="#000"/><path d="M1 2h1v1h1v1H2v1H1z" fill="#00e000"/></svg>
<svg class="a" style="left:11px;top:345px;" width="15" height="17" viewBox="0 0 15 17" shape-rendering="crispEdges"><path d="M1.5 1v15" stroke="#0000c0" stroke-width="1.3"/><rect x="3.5" y="1.5" width="8" height="4" fill="#0ff" stroke="#000"/><path d="M5 3h1v1H5zM7 3h1v1H7zM9 3h1v1H9z" fill="#fff"/><rect x="3.5" y="7.5" width="10" height="4" fill="#ff0" stroke="#000"/><path d="M5 9h1v1H5zM7 9h1v1H7zM9 9h1v1H9zM11 9h1v1h-1z" fill="#fff"/><rect x="3.5" y="13.5" width="5" height="3" fill="#0ff" stroke="#000"/></svg>
<svg class="a" style="left:22px;top:345px;" width="4" height="7" viewBox="0 0 4 7" shape-rendering="crispEdges"><path d="M0 0h1v1h1v1h1v1h1v1H3v1H2v1H1v1H0z" fill="#000"/><path d="M1 2h1v1h1v1H2v1H1z" fill="#00e000"/></svg>
<svg class="a" style="left:10px;top:368px;shape-rendering:crispEdges" width="16" height="15" viewBox="0 0 16 15" shape-rendering="crispEdges"><rect x="0.5" y="7.5" width="7" height="7" fill="#848284" stroke="#000"/><rect x="4.5" y="2.5" width="9" height="9" fill="#ffff80" stroke="#000"/><path d="M6 4h1v1H6zM8 5h1v1H8zM10 4h1v1h-1zM7 7h1v1H7zM11 7h1v1h-1zM6 9h1v1H6zM9 9h1v1H9z" fill="#c6c3c6"/></svg>
<svg class="a" style="left:22px;top:368px;" width="4" height="7" viewBox="0 0 4 7" shape-rendering="crispEdges"><path d="M0 0h1v1h1v1h1v1h1v1H3v1H2v1H1v1H0z" fill="#000"/><path d="M1 2h1v1h1v1H2v1H1z" fill="#00e000"/></svg>
<div class="a" style="left:7px;top:390px;width:23px;height:1px;background:#848284;"></div>
<div class="a" style="left:7px;top:391px;width:23px;height:1px;background:#ffffff;"></div>
<svg class="a" style="left:10px;top:403px;" width="12" height="12" viewBox="0 0 12 12" shape-rendering="crispEdges"><rect x="4" y="0" width="4" height="1" fill="#000"/><rect x="2" y="1" width="2" height="1" fill="#000"/><rect x="4" y="1" width="1" height="1" fill="#ffff00"/><rect x="5" y="1" width="1" height="1" fill="#fff"/><rect x="6" y="1" width="1" height="1" fill="#000"/><rect x="7" y="1" width="1" height="1" fill="#00ffff"/><rect x="8" y="1" width="2" height="1" fill="#000"/><rect x="1" y="2" width="1" height="1" fill="#000"/><rect x="2" y="2" width="1" height="1" fill="#ffff00"/><rect x="3" y="2" width="1" height="1" fill="#fff"/><rect x="4" y="2" width="1" height="1" fill="#ffff00"/><rect x="5" y="2" width="1" height="1" fill="#fff"/><rect x="6" y="2" width="1" height="1" fill="#000"/><rect x="7" y="2" width="1" height="1" fill="#fff"/><rect x="8" y="2" width="1" height="1" fill="#00ffff"/><rect x="9" y="2" width="1" height="1" fill="#fff"/><rect x="10" y="2" width="1" height="1" fill="#000"/><rect x="1" y="3" width="1" height="1" fill="#000"/><rect x="2" y="3" width="1" height="1" fill="#fff"/><rect x="3" y="3" width="1" height="1" fill="#ffff00"/><rect x="4" y="3" width="1" height="1" fill="#fff"/><rect x="5" y="3" width="1" height="1" fill="#ffff00"/><rect x="6" y="3" width="1" height="1" fill="#000"/><rect x="7" y="3" width="1" height="1" fill="#00ffff"/><rect x="8" y="3" width="1" height="1" fill="#fff"/><rect x="9" y="3" width="1" height="1" fill="#00ffff"/><rect x="10" y="3" width="1" height="1" fill="#000"/><rect x="0" y="4" width="1" height="1" fill="#000"/><rect x="1" y="4" width="1" height="1" fill="#ffff00"/><rect x="2" y="4" width="1" height="1" fill="#fff"/><rect x="3" y="4" width="1" height="1" fill="#ffff00"/><rect x="4" y="4" width="1" height="1" fill="#fff"/><rect x="5" y="4" width="1" height="1" fill="#ffff00"/><rect x="6" y="4" width="1" height="1" fill="#000"/><rect x="7" y="4" width="1" height="1" fill="#fff"/><rect x="8" y="4" width="1" height="1" fill="#00ffff"/><rect x="9" y="4" width="1" height="1" fill="#fff"/><rect x="10" y="4" width="1" height="1" fill="#00ffff"/><rect x="11" y="4" width="1" height="1" fill="#000"/><rect x="0" y="5" width="1" height="1" fill="#000"/><rect x="1" y="5" width="1" height="1" fill="#fff"/><rect x="2" y="5" width="1" height="1" fill="#ffff00"/><rect x="3" y="5" width="1" height="1" fill="#fff"/><rect x="4" y="5" width="1" height="1" fill="#ffff00"/><rect x="5" y="5" width="1" height="1" fill="#fff"/><rect x="6" y="5" width="1" height="1" fill="#000"/><rect x="7" y="5" width="1" height="1" fill="#00ffff"/><rect x="8" y="5" width="1" height="1" fill="#fff"/><rect x="9" y="5" width="1" height="1" fill="#00ffff"/><rect x="10" y="5" width="1" height="1" fill="#fff"/><rect x="11" y="5" width="1" height="1" fill="#000"/><rect x="0" y="6" width="1" height="1" fill="#000"/><rect x="1" y="6" width="1" height="1" fill="#ffff00"/><rect x="2" y="6" width="1" height="1" fill="#fff"/><rect x="3" y="6" width="1" height="1" fill="#ffff00"/><rect x="4" y="6" width="1" height="1" fill="#fff"/><rect x="5" y="6" width="7" height="1" fill="#000"/><rect x="0" y="7" width="1" height="1" fill="#000"/><rect x="1" y="7" width="1" height="1" fill="#fff"/><rect x="2" y="7" width="1" height="1" fill="#ffff00"/><rect x="3" y="7" width="1" height="1" fill="#fff"/><rect x="4" y="7" width="1" height="1" fill="#000"/><rect x="5" y="7" width="1" height="1" fill="#840084"/><rect x="6" y="7" width="1" height="1" fill="#fff"/><rect x="7" y="7" width="1" height="1" fill="#840084"/><rect x="8" y="7" width="1" height="1" fill="#fff"/><rect x="9" y="7" width="1" height="1" fill="#840084"/><rect x="10" y="7" width="1" height="1" fill="#fff"/><rect x="11" y="7" width="1" height="1" fill="#000"/><rect x="1" y="8" width="1" height="1" fill="#000"/><rect x="2" y="8" width="1" height="1" fill="#ffff00"/><rect x="3" y="8" width="1" height="1" fill="#000"/><rect x="4" y="8" width="1" height="1" fill="#840084"/><rect x="5" y="8" width="1" height="1" fill="#fff"/><rect x="6" y="8" width="1" height="1" fill="#840084"/><rect x="7" y="8" width="1" height="1" fill="#fff"/><rect x="8" y="8" width="1" height="1" fill="#840084"/><rect x="9" y="8" width="1" height="1" fill="#fff"/><rect x="10" y="8" width="1" height="1" fill="#000"/><rect x="1" y="9" width="2" height="1" fill="#000"/><rect x="3" y="9" width="1" height="1" fill="#840084"/><rect x="4" y="9" width="1" height="1" fill="#fff"/><rect x="5" y="9" width="1" height="1" fill="#840084"/><rect x="6" y="9" width="1" height="1" fill="#fff"/><rect x="7" y="9" width="1" height="1" fill="#840084"/><rect x="8" y="9" width="1" height="1" fill="#fff"/><rect x="9" y="9" width="1" height="1" fill="#840084"/><rect x="10" y="9" width="1" height="1" fill="#000"/><rect x="2" y="10" width="2" height="1" fill="#000"/><rect x="4" y="10" width="1" height="1" fill="#840084"/><rect x="5" y="10" width="1" height="1" fill="#fff"/><rect x="6" y="10" width="1" height="1" fill="#840084"/><rect x="7" y="10" width="1" height="1" fill="#fff"/><rect x="8" y="10" width="2" height="1" fill="#000"/><rect x="4" y="11" width="4" height="1" fill="#000"/></svg>
<svg class="a" style="left:22px;top:399px;" width="4" height="7" viewBox="0 0 4 7" shape-rendering="crispEdges"><path d="M0 0h1v1h1v1h1v1h1v1H3v1H2v1H1v1H0z" fill="#000"/><path d="M1 2h1v1h1v1H2v1H1z" fill="#00e000"/></svg>
<div class="a" style="left:24px;top:406px;width:2px;height:1px;background:#000000;"></div>
<div class="a" style="left:7px;top:421px;width:23px;height:1px;background:#848284;"></div>
<div class="a" style="left:7px;top:422px;width:23px;height:1px;background:#ffffff;"></div>
<svg class="a" style="left:10px;top:432px;" width="15" height="13" viewBox="0 0 15 13" shape-rendering="crispEdges"><rect x="5" y="0" width="8" height="1" fill="#000084"/><rect x="4" y="1" width="2" height="1" fill="#000084"/><rect x="6" y="1" width="4" height="1" fill="#fff"/><rect x="10" y="1" width="3" height="1" fill="#000084"/><rect x="3" y="2" width="10" height="1" fill="#000084"/><rect x="2" y="3" width="11" height="1" fill="#000084"/><rect x="1" y="4" width="12" height="1" fill="#000084"/><rect x="1" y="5" width="1" height="1" fill="#000084"/><rect x="2" y="5" width="7" height="1" fill="#848284"/><rect x="9" y="5" width="4" height="1" fill="#000084"/><rect x="1" y="6" width="1" height="1" fill="#000084"/><rect x="2" y="6" width="7" height="1" fill="#848284"/><rect x="9" y="6" width="4" height="1" fill="#000084"/><rect x="1" y="7" width="1" height="1" fill="#000084"/><rect x="2" y="7" width="7" height="1" fill="#848284"/><rect x="9" y="7" width="4" height="1" fill="#000084"/><rect x="1" y="8" width="1" height="1" fill="#000084"/><rect x="2" y="8" width="7" height="1" fill="#848284"/><rect x="9" y="8" width="3" height="1" fill="#000084"/><rect x="12" y="8" width="2" height="1" fill="#848284"/><rect x="1" y="9" width="1" height="1" fill="#000084"/><rect x="2" y="9" width="7" height="1" fill="#848284"/><rect x="9" y="9" width="2" height="1" fill="#000084"/><rect x="11" y="9" width="3" height="1" fill="#848284"/><rect x="1" y="10" width="1" height="1" fill="#000084"/><rect x="2" y="10" width="7" height="1" fill="#848284"/><rect x="9" y="10" width="1" height="1" fill="#000084"/><rect x="10" y="10" width="4" height="1" fill="#848284"/><rect x="1" y="11" width="9" height="1" fill="#000084"/><rect x="10" y="11" width="3" height="1" fill="#848284"/><rect x="9" y="12" width="2" height="1" fill="#848284"/></svg>
<div class="a" style="left:33px;top:83px;width:1px;height:527px;background:#000000;"></div>
<div class="a" style="left:33px;top:83px;width:888px;height:1px;background:#000000;"></div>
<div class="a" style="left:920px;top:83px;width:1px;height:1px;background:#000000;"></div>
<div class="a" style="left:34px;top:84px;width:886px;height:1px;background:#d6d3d6;"></div>
<div class="a" style="left:34px;top:84px;width:1px;height:526px;background:#d6d3d6;"></div>
<div class="a" style="left:36px;top:86px;width:19px;height:1px;background:#848284;"></div>
<div class="a" style="left:36px;top:86px;width:1px;height:19px;background:#848284;"></div>
<div class="a" style="left:36px;top:104px;width:19px;height:1px;background:#ffffff;"></div>
<div class="a" style="left:54px;top:86px;width:1px;height:19px;background:#ffffff;"></div>
<div class="a" style="left:37px;top:87px;width:17px;height:1px;background:#ffffff;"></div>
<div class="a" style="left:37px;top:87px;width:1px;height:17px;background:#ffffff;"></div>
<div class="a" style="left:37px;top:103px;width:17px;height:1px;background:#848284;"></div>
<div class="a" style="left:53px;top:87px;width:1px;height:17px;background:#848284;"></div>
<svg class="a" style="left:38px;top:88px;shape-rendering:crispEdges" width="15" height="15" viewBox="0 0 15 15" shape-rendering="crispEdges"><path d="M4 1v13M1 4h14" stroke="#000" stroke-width="1"/></svg>
<div class="a" style="left:55px;top:86px;width:852px;height:1px;background:#848284;"></div>
<div class="a" style="left:55px;top:86px;width:1px;height:19px;background:#848284;"></div>
<div class="a" style="left:55px;top:104px;width:852px;height:1px;background:#ffffff;"></div>
<div class="a" style="left:906px;top:86px;width:1px;height:19px;background:#ffffff;"></div>
<div class="a" style="left:56px;top:87px;width:850px;height:1px;background:#ffffff;"></div>
<div class="a" style="left:56px;top:87px;width:1px;height:17px;background:#ffffff;"></div>
<div class="a" style="left:56px;top:103px;width:850px;height:1px;background:#848284;"></div>
<div class="a" style="left:905px;top:87px;width:1px;height:17px;background:#848284;"></div>
<div class="a" style="left:309px;top:87px;width:312px;height:16px;background:#ffffff;"></div>
<div class="a" style="left:309px;top:87px;width:1px;height:16px;background:#000000;"></div>
<div class="a" style="left:309px;top:87px;width:312px;height:1px;background:#000000;"></div>
<div class="a" style="left:36px;top:108px;width:1px;height:487px;background:#848284;"></div>
<div class="a" style="left:54px;top:108px;width:1px;height:487px;background:#ffffff;"></div>
<div class="a" style="left:36px;top:594px;width:19px;height:1px;background:#ffffff;"></div>
<div class="a" style="left:37px;top:108px;width:1px;height:486px;background:#ffffff;"></div>
<div class="a" style="left:53px;top:108px;width:1px;height:486px;background:#848284;"></div>
<div class="a" style="left:37px;top:593px;width:17px;height:1px;background:#848284;"></div>
<div class="a" style="left:37px;top:127px;width:16px;height:441px;background:#ffffff;"></div>
<div class="a" style="left:37px;top:127px;width:16px;height:1px;background:#000000;"></div>
<div class="a" style="left:37px;top:127px;width:1px;height:441px;background:#000000;"></div>
<div class="a" style="left:57px;top:107px;width:848px;height:487px;background:#efebef;"></div>
<div class="a" style="left:57px;top:107px;width:848px;height:1px;background:#848284;"></div>
<div class="a" style="left:57px;top:107px;width:1px;height:487px;background:#848284;"></div>
<div class="a" style="left:58px;top:108px;width:847px;height:1px;background:#000000;"></div>
<div class="a" style="left:58px;top:108px;width:1px;height:486px;background:#000000;"></div>
<div class="a" style="left:905px;top:100px;width:16px;height:475px;background:#cecfce;"></div>
<div class="a" style="left:905px;top:84px;width:16px;height:16px;background:#c6c3c6;"></div>
<div class="a" style="left:905px;top:84px;width:16px;height:1px;background:#d6d3d6;"></div>
<div class="a" style="left:905px;top:84px;width:1px;height:16px;background:#d6d3d6;"></div>
<div class="a" style="left:905px;top:99px;width:16px;height:1px;background:#000000;"></div>
<div class="a" style="left:920px;top:84px;width:1px;height:16px;background:#000000;"></div>
<div class="a" style="left:906px;top:85px;width:14px;height:1px;background:#ffffff;"></div>
<div class="a" style="left:906px;top:85px;width:1px;height:14px;background:#ffffff;"></div>
<div class="a" style="left:906px;top:98px;width:14px;height:1px;background:#848284;"></div>
<div class="a" style="left:919px;top:85px;width:1px;height:14px;background:#848284;"></div>
<svg class="a" style="left:909px;top:90px;" width="7" height="4" viewBox="0 0 7 4" shape-rendering="crispEdges"><path d="M3 0h1v1h1v1h1v1h1v1H0V3h1V2h1V1h1z" fill="#000"/></svg>
<div class="a" style="left:905px;top:214px;width:16px;height:249px;background:#c6c3c6;"></div>
<div class="a" style="left:905px;top:214px;width:16px;height:1px;background:#d6d3d6;"></div>
<div class="a" style="left:905px;top:214px;width:1px;height:249px;background:#d6d3d6;"></div>
<div class="a" style="left:905px;top:462px;width:16px;height:1px;background:#000000;"></div>
<div class="a" style="left:920px;top:214px;width:1px;height:249px;background:#000000;"></div>
<div class="a" style="left:906px;top:215px;width:14px;height:1px;background:#ffffff;"></div>
<div class="a" style="left:906px;top:215px;width:1px;height:247px;background:#ffffff;"></div>
<div class="a" style="left:906px;top:461px;width:14px;height:1px;background:#848284;"></div>
<div class="a" style="left:919px;top:215px;width:1px;height:247px;background:#848284;"></div>
<div class="a" style="left:905px;top:574px;width:16px;height:15px;background:#c6c3c6;"></div>
<div class="a" style="left:905px;top:574px;width:16px;height:1px;background:#d6d3d6;"></div>
<div class="a" style="left:905px;top:574px;width:1px;height:15px;background:#d6d3d6;"></div>
<div class="a" style="left:905px;top:588px;width:16px;height:1px;background:#000000;"></div>
<div class="a" style="left:920px;top:574px;width:1px;height:15px;background:#000000;"></div>
<div class="a" style="left:906px;top:575px;width:14px;height:1px;background:#ffffff;"></div>
<div class="a" style="left:906px;top:575px;width:1px;height:13px;background:#ffffff;"></div>
<div class="a" style="left:906px;top:587px;width:14px;height:1px;background:#848284;"></div>
<div class="a" style="left:919px;top:575px;width:1px;height:13px;background:#848284;"></div>
<svg class="a" style="left:909px;top:580px;" width="7" height="4" viewBox="0 0 7 4" shape-rendering="crispEdges"><path d="M0 0h7v1h-1v1h-1v1h-1v1h-1v-1h-1v-1h-1v-1h-1z" fill="#000000"/></svg>
<div class="a" style="left:905px;top:589px;width:16px;height:5px;background:#000000;"></div>
<div class="a" style="left:56px;top:87px;width:849px;height:16px;overflow:hidden"><div class="t" style="left:-19.80px;top:4px;width:40px;text-align:center;font-size:11px">16</div><div class="t" style="left:-3.99px;top:4px;width:40px;text-align:center;font-size:11px">15</div><div class="t" style="left:11.82px;top:4px;width:40px;text-align:center;font-size:11px">14</div><div class="t" style="left:27.62px;top:4px;width:40px;text-align:center;font-size:11px">13</div><div class="t" style="left:43.43px;top:4px;width:40px;text-align:center;font-size:11px">12</div><div class="t" style="left:59.23px;top:4px;width:40px;text-align:center;font-size:11px">11</div><div class="t" style="left:75.04px;top:4px;width:40px;text-align:center;font-size:11px">10</div><div class="t" style="left:90.85px;top:4px;width:40px;text-align:center;font-size:11px">9</div><div class="t" style="left:106.65px;top:4px;width:40px;text-align:center;font-size:11px">8</div><div class="t" style="left:122.46px;top:4px;width:40px;text-align:center;font-size:11px">7</div><div class="t" style="left:138.26px;top:4px;width:40px;text-align:center;font-size:11px">6</div><div class="t" style="left:154.07px;top:4px;width:40px;text-align:center;font-size:11px">5</div><div class="t" style="left:169.88px;top:4px;width:40px;text-align:center;font-size:11px">4</div><div class="t" style="left:185.68px;top:4px;width:40px;text-align:center;font-size:11px">3</div><div class="t" style="left:201.49px;top:4px;width:40px;text-align:center;font-size:11px">2</div><div class="t" style="left:217.29px;top:4px;width:40px;text-align:center;font-size:11px">1</div><div class="t" style="left:248.91px;top:4px;width:40px;text-align:center;font-size:11px">1</div><div class="t" style="left:264.71px;top:4px;width:40px;text-align:center;font-size:11px">2</div><div class="t" style="left:280.52px;top:4px;width:40px;text-align:center;font-size:11px">3</div><div class="t" style="left:296.32px;top:4px;width:40px;text-align:center;font-size:11px">4</div><div class="t" style="left:312.13px;top:4px;width:40px;text-align:center;font-size:11px">5</div><div class="t" style="left:327.94px;top:4px;width:40px;text-align:center;font-size:11px">6</div><div class="t" style="left:343.74px;top:4px;width:40px;text-align:center;font-size:11px">7</div><div class="t" style="left:359.55px;top:4px;width:40px;text-align:center;font-size:11px">8</div><div class="t" style="left:375.35px;top:4px;width:40px;text-align:center;font-size:11px">9</div><div class="t" style="left:391.16px;top:4px;width:40px;text-align:center;font-size:11px">10</div><div class="t" style="left:406.97px;top:4px;width:40px;text-align:center;font-size:11px">11</div><div class="t" style="left:422.77px;top:4px;width:40px;text-align:center;font-size:11px">12</div><div class="t" style="left:438.58px;top:4px;width:40px;text-align:center;font-size:11px">13</div><div class="t" style="left:454.38px;top:4px;width:40px;text-align:center;font-size:11px">14</div><div class="t" style="left:470.19px;top:4px;width:40px;text-align:center;font-size:11px">15</div><div class="t" style="left:486.00px;top:4px;width:40px;text-align:center;font-size:11px">16</div><div class="t" style="left:501.80px;top:4px;width:40px;text-align:center;font-size:11px">17</div><div class="t" style="left:517.61px;top:4px;width:40px;text-align:center;font-size:11px">18</div><div class="t" style="left:533.41px;top:4px;width:40px;text-align:center;font-size:11px">19</div><div class="t" style="left:549.22px;top:4px;width:40px;text-align:center;font-size:11px">20</div><div class="t" style="left:565.03px;top:4px;width:40px;text-align:center;font-size:11px">21</div><div class="t" style="left:580.83px;top:4px;width:40px;text-align:center;font-size:11px">22</div><div class="t" style="left:596.64px;top:4px;width:40px;text-align:center;font-size:11px">23</div><div class="t" style="left:612.44px;top:4px;width:40px;text-align:center;font-size:11px">24</div><div class="t" style="left:628.25px;top:4px;width:40px;text-align:center;font-size:11px">25</div><div class="t" style="left:644.06px;top:4px;width:40px;text-align:center;font-size:11px">26</div><div class="t" style="left:659.86px;top:4px;width:40px;text-align:center;font-size:11px">27</div><div class="t" style="left:675.67px;top:4px;width:40px;text-align:center;font-size:11px">28</div><div class="t" style="left:691.47px;top:4px;width:40px;text-align:center;font-size:11px">29</div><div class="t" style="left:707.28px;top:4px;width:40px;text-align:center;font-size:11px">30</div><div class="t" style="left:723.09px;top:4px;width:40px;text-align:center;font-size:11px">31</div><div class="t" style="left:738.89px;top:4px;width:40px;text-align:center;font-size:11px">32</div><div class="t" style="left:754.70px;top:4px;width:40px;text-align:center;font-size:11px">33</div><div class="t" style="left:770.50px;top:4px;width:40px;text-align:center;font-size:11px">34</div><div class="t" style="left:786.31px;top:4px;width:40px;text-align:center;font-size:11px">35</div><div class="t" style="left:802.12px;top:4px;width:40px;text-align:center;font-size:11px">36</div><div class="t" style="left:817.92px;top:4px;width:40px;text-align:center;font-size:11px">37</div><div class="t" style="left:833.73px;top:4px;width:40px;text-align:center;font-size:11px">38</div></div>
<div class="a" style="left:38px;top:127px;width:15px;height:467px;overflow:hidden"><div class="t" style="left:-12px;top:25.76px;width:40px;text-align:center;font-size:11px;transform:rotate(-90deg)">2</div><div class="t" style="left:-12px;top:56.82px;width:40px;text-align:center;font-size:11px;transform:rotate(-90deg)">4</div><div class="t" style="left:-12px;top:87.88px;width:40px;text-align:center;font-size:11px;transform:rotate(-90deg)">6</div><div class="t" style="left:-12px;top:118.94px;width:40px;text-align:center;font-size:11px;transform:rotate(-90deg)">8</div><div class="t" style="left:-12px;top:150.00px;width:40px;text-align:center;font-size:11px;transform:rotate(-90deg)">10</div><div class="t" style="left:-12px;top:181.06px;width:40px;text-align:center;font-size:11px;transform:rotate(-90deg)">12</div><div class="t" style="left:-12px;top:212.12px;width:40px;text-align:center;font-size:11px;transform:rotate(-90deg)">14</div><div class="t" style="left:-12px;top:243.18px;width:40px;text-align:center;font-size:11px;transform:rotate(-90deg)">16</div><div class="t" style="left:-12px;top:274.24px;width:40px;text-align:center;font-size:11px;transform:rotate(-90deg)">18</div><div class="t" style="left:-12px;top:305.30px;width:40px;text-align:center;font-size:11px;transform:rotate(-90deg)">20</div><div class="t" style="left:-12px;top:336.36px;width:40px;text-align:center;font-size:11px;transform:rotate(-90deg)">22</div><div class="t" style="left:-12px;top:367.42px;width:40px;text-align:center;font-size:11px;transform:rotate(-90deg)">24</div><div class="t" style="left:-12px;top:398.48px;width:40px;text-align:center;font-size:11px;transform:rotate(-90deg)">26</div><div class="t" style="left:-12px;top:429.54px;width:40px;text-align:center;font-size:11px;transform:rotate(-90deg)">28</div><div class="t" style="left:-12px;top:460.60px;width:40px;text-align:center;font-size:11px;transform:rotate(-90deg)">30</div></div>
<div class="a" style="left:203px;top:84px;width:1px;height:24px;background:#000;"></div>
<div class="a" style="left:34px;top:317px;width:3px;height:1px;background:#222;"></div>
<div class="a" style="left:38px;top:317px;width:4px;height:1px;background:#222;"></div>
<div class="a" style="left:50px;top:317px;width:8px;height:1px;background:#222;"></div>
<div class="a" style="left:299px;top:117px;width:333px;height:461px;background:#ffffff;"></div>
<div class="a" style="left:299px;top:117px;width:333px;height:1px;background:#848284;"></div>
<div class="a" style="left:299px;top:117px;width:1px;height:461px;background:#848284;"></div>
<div class="a" style="left:299px;top:577px;width:333px;height:1px;background:#848284;"></div>
<div class="a" style="left:631px;top:117px;width:1px;height:461px;background:#848284;"></div>
<div class="a" style="left:309px;top:127px;width:313px;height:1px;background:#848284;"></div>
<div class="a" style="left:309px;top:127px;width:1px;height:441px;background:#848284;"></div>
<div class="a" style="left:309px;top:567px;width:313px;height:1px;background:#848284;"></div>
<div class="a" style="left:621px;top:127px;width:1px;height:441px;background:#848284;"></div>
<div class="a" style="left:338px;top:155px;width:254px;height:273px;background:#000000;"></div>
<div class="a" style="left:339px;top:156px;width:252px;height:271px;background:#dc2300;"></div>
<svg class="a" style="left:336px;top:183px;shape-rendering:auto" width="252" height="164" viewBox="0 0 252 164" shape-rendering="crispEdges"><ellipse cx="126" cy="81.5" rx="123.5" ry="79" fill="#fff" stroke="#000" stroke-width="1"/></svg>
<div class="t" style="left:343px;top:242px;font-size:43px;font-family:'Liberation Serif',serif;letter-spacing:0.45px;-webkit-text-stroke:0.5px #000">Hello,</div>
<div class="t" style="left:458px;top:242px;font-size:43px;font-family:'Liberation Serif',serif;letter-spacing:1.45px;-webkit-text-stroke:0.5px #000">World!</div>
<div class="a" style="left:350px;top:425px;width:175px;height:165px;clip-path:path('M109 5L167.7 107.3Q87.85 138.4 8 159.5Z')"><div class="a" style="left:-10px;top:-10px;width:195px;height:185px;filter:blur(2px);background:linear-gradient(rgba(0,0,0,0.3) 5%,rgba(0,0,0,0) 45%),conic-gradient(from 0deg at 119px 15px,#000 150deg,#050505 158deg,#141414 166deg,#2e2e2e 174deg,#505050 182deg,#666 190deg,#606060 200deg,#4c4c4c 207deg,#333 211deg,#1c1c1c 213.5deg,#111 230deg,#000 300deg)"></div></div>
<div class="a" style="left:33px;top:594px;width:1px;height:16px;background:#000000;"></div>
<div class="a" style="left:34px;top:594px;width:15px;height:1px;background:#000000;"></div>
<div class="a" style="left:34px;top:594px;width:1px;height:15px;background:#000000;"></div>
<div class="a" style="left:35px;top:595px;width:14px;height:14px;background:#cecfce;"></div>
<div class="a" style="left:49px;top:594px;width:1px;height:16px;background:#ffffff;"></div>
<div class="a" style="left:35px;top:609px;width:15px;height:1px;background:#ffffff;"></div>
<div class="a" style="left:50px;top:594px;width:16px;height:16px;background:#c6c3c6;"></div>
<div class="a" style="left:50px;top:595px;width:1px;height:14px;background:#ffffff;"></div>
<div class="a" style="left:50px;top:595px;width:15px;height:1px;background:#ffffff;"></div>
<div class="a" style="left:65px;top:594px;width:1px;height:16px;background:#000000;"></div>
<div class="a" style="left:50px;top:609px;width:16px;height:1px;background:#000000;"></div>
<div class="a" style="left:64px;top:596px;width:1px;height:13px;background:#848284;"></div>
<div class="a" style="left:51px;top:608px;width:14px;height:1px;background:#848284;"></div>
<div class="a" style="left:66px;top:594px;width:16px;height:16px;background:#c6c3c6;"></div>
<div class="a" style="left:66px;top:595px;width:1px;height:14px;background:#ffffff;"></div>
<div class="a" style="left:66px;top:595px;width:15px;height:1px;background:#ffffff;"></div>
<div class="a" style="left:81px;top:594px;width:1px;height:16px;background:#000000;"></div>
<div class="a" style="left:66px;top:609px;width:16px;height:1px;background:#000000;"></div>
<div class="a" style="left:80px;top:596px;width:1px;height:13px;background:#848284;"></div>
<div class="a" style="left:67px;top:608px;width:14px;height:1px;background:#848284;"></div>
<div class="a" style="left:82px;top:594px;width:16px;height:16px;background:#c6c3c6;"></div>
<div class="a" style="left:82px;top:595px;width:1px;height:14px;background:#ffffff;"></div>
<div class="a" style="left:82px;top:595px;width:15px;height:1px;background:#ffffff;"></div>
<div class="a" style="left:97px;top:594px;width:1px;height:16px;background:#000000;"></div>
<div class="a" style="left:82px;top:609px;width:16px;height:1px;background:#000000;"></div>
<div class="a" style="left:96px;top:596px;width:1px;height:13px;background:#848284;"></div>
<div class="a" style="left:83px;top:608px;width:14px;height:1px;background:#848284;"></div>
<div class="a" style="left:98px;top:594px;width:16px;height:16px;background:#c6c3c6;"></div>
<div class="a" style="left:98px;top:595px;width:1px;height:14px;background:#ffffff;"></div>
<div class="a" style="left:98px;top:595px;width:15px;height:1px;background:#ffffff;"></div>
<div class="a" style="left:113px;top:594px;width:1px;height:16px;background:#000000;"></div>
<div class="a" style="left:98px;top:609px;width:16px;height:1px;background:#000000;"></div>
<div class="a" style="left:112px;top:596px;width:1px;height:13px;background:#848284;"></div>
<div class="a" style="left:99px;top:608px;width:14px;height:1px;background:#848284;"></div>
<div class="a" style="left:114px;top:594px;width:16px;height:16px;background:#c6c3c6;"></div>
<div class="a" style="left:114px;top:595px;width:1px;height:14px;background:#ffffff;"></div>
<div class="a" style="left:114px;top:595px;width:15px;height:1px;background:#ffffff;"></div>
<div class="a" style="left:129px;top:594px;width:1px;height:16px;background:#000000;"></div>
<div class="a" style="left:114px;top:609px;width:16px;height:1px;background:#000000;"></div>
<div class="a" style="left:128px;top:596px;width:1px;height:13px;background:#848284;"></div>
<div class="a" style="left:115px;top:608px;width:14px;height:1px;background:#848284;"></div>
<div class="a" style="left:130px;top:594px;width:16px;height:16px;background:#c6c3c6;"></div>
<div class="a" style="left:130px;top:595px;width:1px;height:14px;background:#ffffff;"></div>
<div class="a" style="left:130px;top:595px;width:15px;height:1px;background:#ffffff;"></div>
<div class="a" style="left:145px;top:594px;width:1px;height:16px;background:#000000;"></div>
<div class="a" style="left:130px;top:609px;width:16px;height:1px;background:#000000;"></div>
<div class="a" style="left:144px;top:596px;width:1px;height:13px;background:#848284;"></div>
<div class="a" style="left:131px;top:608px;width:14px;height:1px;background:#848284;"></div>
<svg class="a" style="left:38px;top:598px;" width="10" height="10" viewBox="0 0 10 10" shape-rendering="crispEdges"><rect x="1.5" y="1.5" width="5" height="5" fill="#fff" stroke="#000"/><rect x="4.5" y="3.5" width="5" height="6" fill="#fff" stroke="#000"/></svg>
<svg class="a" style="left:55px;top:598px;" width="6" height="9" viewBox="0 0 6 9" shape-rendering="crispEdges"><rect x="0.5" y="0.5" width="5" height="8" fill="#aaa" stroke="#000"/></svg>
<svg class="a" style="left:70px;top:598px;" width="9" height="9" viewBox="0 0 9 9" shape-rendering="crispEdges"><path d="M0 0h8v1H1v8H0zM2 2h7v1H3v7H2zM7 7h2v2H7z" fill="#000"/></svg>
<svg class="a" style="left:86px;top:598px;shape-rendering:auto" width="7" height="9" viewBox="0 0 7 9" shape-rendering="crispEdges"><path d="M0 0h1v9H0zM6 0v9L2 4.5z" fill="#000"/></svg>
<svg class="a" style="left:103px;top:598px;shape-rendering:auto" width="5" height="9" viewBox="0 0 5 9" shape-rendering="crispEdges"><path d="M4 0v9L0 4.5z" fill="#000"/></svg>
<svg class="a" style="left:120px;top:598px;shape-rendering:auto" width="5" height="9" viewBox="0 0 5 9" shape-rendering="crispEdges"><path d="M0 0v9l4-4.5z" fill="#000"/></svg>
<svg class="a" style="left:134px;top:598px;shape-rendering:auto" width="7" height="9" viewBox="0 0 7 9" shape-rendering="crispEdges"><path d="M0 0v9l4-4.5zM5 0h1v9H5z" fill="#000"/></svg>
<div class="a" style="left:146px;top:594px;width:280px;height:16px;background:#c6c3c6;"></div>
<div class="a" style="left:146px;top:594px;width:280px;height:1px;background:#000000;"></div>
<svg class="a" style="left:145px;top:593px" width="62" height="18" viewBox="0 0 62 18"><path d="M1 1.5L8.5 16.5H51.5L58 1.5" fill="#fff" stroke="#000" stroke-width="1.2"/></svg>
<div class="t" style="left:155px;top:596px;font-size:12px;font-family:'Liberation Sans',sans-serif;">Slide 1</div>
<div class="a" style="left:426px;top:594px;width:6px;height:16px;background:#c6c3c6;"></div>
<div class="a" style="left:425px;top:594px;width:1px;height:16px;background:#000000;"></div>
<div class="a" style="left:426px;top:595px;width:1px;height:14px;background:#ffffff;"></div>
<div class="a" style="left:426px;top:595px;width:5px;height:1px;background:#ffffff;"></div>
<div class="a" style="left:431px;top:594px;width:1px;height:16px;background:#000000;"></div>
<div class="a" style="left:425px;top:609px;width:7px;height:1px;background:#000000;"></div>
<div class="a" style="left:432px;top:594px;width:473px;height:16px;background:#cecfce;"></div>
<div class="a" style="left:432px;top:594px;width:16px;height:16px;background:#c6c3c6;"></div>
<div class="a" style="left:432px;top:594px;width:16px;height:1px;background:#d6d3d6;"></div>
<div class="a" style="left:432px;top:594px;width:1px;height:16px;background:#d6d3d6;"></div>
<div class="a" style="left:432px;top:609px;width:16px;height:1px;background:#000000;"></div>
<div class="a" style="left:447px;top:594px;width:1px;height:16px;background:#000000;"></div>
<div class="a" style="left:433px;top:595px;width:14px;height:1px;background:#ffffff;"></div>
<div class="a" style="left:433px;top:595px;width:1px;height:14px;background:#ffffff;"></div>
<div class="a" style="left:433px;top:608px;width:14px;height:1px;background:#848284;"></div>
<div class="a" style="left:446px;top:595px;width:1px;height:14px;background:#848284;"></div>
<svg class="a" style="left:437px;top:598px;" width="5" height="8" viewBox="0 0 5 8" shape-rendering="crispEdges"><path d="M4 0h1v8H4v-1H3V6H2V5H1V3h1V2h1V1h1z" fill="#000"/></svg>
<div class="a" style="left:489px;top:594px;width:370px;height:16px;background:#c6c3c6;"></div>
<div class="a" style="left:489px;top:594px;width:370px;height:1px;background:#d6d3d6;"></div>
<div class="a" style="left:489px;top:594px;width:1px;height:16px;background:#d6d3d6;"></div>
<div class="a" style="left:489px;top:609px;width:370px;height:1px;background:#000000;"></div>
<div class="a" style="left:858px;top:594px;width:1px;height:16px;background:#000000;"></div>
<div class="a" style="left:490px;top:595px;width:368px;height:1px;background:#ffffff;"></div>
<div class="a" style="left:490px;top:595px;width:1px;height:14px;background:#ffffff;"></div>
<div class="a" style="left:490px;top:608px;width:368px;height:1px;background:#848284;"></div>
<div class="a" style="left:857px;top:595px;width:1px;height:14px;background:#848284;"></div>
<div class="a" style="left:885px;top:594px;width:16px;height:16px;background:#c6c3c6;"></div>
<div class="a" style="left:885px;top:594px;width:16px;height:1px;background:#d6d3d6;"></div>
<div class="a" style="left:885px;top:594px;width:1px;height:16px;background:#d6d3d6;"></div>
<div class="a" style="left:885px;top:609px;width:16px;height:1px;background:#000000;"></div>
<div class="a" style="left:900px;top:594px;width:1px;height:16px;background:#000000;"></div>
<div class="a" style="left:886px;top:595px;width:14px;height:1px;background:#ffffff;"></div>
<div class="a" style="left:886px;top:595px;width:1px;height:14px;background:#ffffff;"></div>
<div class="a" style="left:886px;top:608px;width:14px;height:1px;background:#848284;"></div>
<div class="a" style="left:899px;top:595px;width:1px;height:14px;background:#848284;"></div>
<svg class="a" style="left:891px;top:598px;" width="5" height="8" viewBox="0 0 5 8" shape-rendering="crispEdges"><path d="M0 0h1v1h1v1h1v1h1v2H3v1H2v1H1v1H0z" fill="#000"/></svg>
<div class="a" style="left:901px;top:594px;width:4px;height:16px;background:#000000;"></div>
<div class="a" style="left:905px;top:594px;width:16px;height:16px;background:#c6c3c6;"></div>
<div class="a" style="left:2px;top:611px;width:920px;height:1px;background:#ffffff;"></div>
<div class="a" style="left:8px;top:614px;width:255px;height:1px;background:#848284;"></div>
<div class="a" style="left:8px;top:614px;width:1px;height:18px;background:#848284;"></div>
<div class="a" style="left:8px;top:631px;width:255px;height:1px;background:#ffffff;"></div>
<div class="a" style="left:262px;top:614px;width:1px;height:18px;background:#ffffff;"></div>
<div class="a" style="left:267px;top:614px;width:277px;height:1px;background:#848284;"></div>
<div class="a" style="left:267px;top:614px;width:1px;height:18px;background:#848284;"></div>
<div class="a" style="left:267px;top:631px;width:277px;height:1px;background:#ffffff;"></div>
<div class="a" style="left:543px;top:614px;width:1px;height:18px;background:#ffffff;"></div>
<div class="a" style="left:548px;top:614px;width:54px;height:1px;background:#848284;"></div>
<div class="a" style="left:548px;top:614px;width:1px;height:18px;background:#848284;"></div>
<div class="a" style="left:548px;top:631px;width:54px;height:1px;background:#ffffff;"></div>
<div class="a" style="left:601px;top:614px;width:1px;height:18px;background:#ffffff;"></div>
<div class="a" style="left:606px;top:614px;width:18px;height:1px;background:#848284;"></div>
<div class="a" style="left:606px;top:614px;width:1px;height:18px;background:#848284;"></div>
<div class="a" style="left:606px;top:631px;width:18px;height:1px;background:#ffffff;"></div>
<div class="a" style="left:623px;top:614px;width:1px;height:18px;background:#ffffff;"></div>
<div class="a" style="left:628px;top:614px;width:132px;height:1px;background:#848284;"></div>
<div class="a" style="left:628px;top:614px;width:1px;height:18px;background:#848284;"></div>
<div class="a" style="left:628px;top:631px;width:132px;height:1px;background:#ffffff;"></div>
<div class="a" style="left:759px;top:614px;width:1px;height:18px;background:#ffffff;"></div>
<div class="a" style="left:764px;top:614px;width:154px;height:1px;background:#848284;"></div>
<div class="a" style="left:764px;top:614px;width:1px;height:18px;background:#848284;"></div>
<div class="a" style="left:764px;top:631px;width:154px;height:1px;background:#ffffff;"></div>
<div class="a" style="left:917px;top:614px;width:1px;height:18px;background:#ffffff;"></div>
<div class="t" style="left:294px;top:618px;font-size:12px;font-family:'Liberation Sans',sans-serif;">-6.70 / 12.27</div>
<div class="t" style="left:432px;top:618px;font-size:12px;font-family:'Liberation Sans',sans-serif;">0.00 x 0.00</div>
<div class="t" style="left:563px;top:618px;font-size:12px;font-family:'Liberation Sans',sans-serif;">41%</div>
<div class="t" style="left:613px;top:618px;font-size:12px;font-family:'Liberation Sans',sans-serif;">*</div>
<div class="t" style="left:630px;top:618px;font-size:12px;font-family:'Liberation Sans',sans-serif;">Slide 1 / 1</div>
<div class="t" style="left:765px;top:618px;font-size:12px;font-family:'Liberation Sans',sans-serif;">Default</div>
<svg class="a" style="left:272px;top:614px;" width="18" height="14" viewBox="0 0 18 14" shape-rendering="crispEdges"><path d="M5 1h1v9H5zM1 5h10v1H1z" fill="#0000ff"/><path d="M7 6h1v1H7zM9 6h1v1H9zM11 6h1v1h-1zM13 6h1v1h-1zM15 6h1v1h-1zM15 8h1v1h-1zM15 10h1v1h-1zM5 8h1v1H5zM5 10h1v1H5zM5 12h1v1H5zM7 12h1v1H7zM9 12h1v1H9zM11 12h1v1h-1zM13 12h1v1h-1zM15 12h1v1h-1z" fill="#000"/></svg>
<svg class="a" style="left:410px;top:614px;" width="17" height="14" viewBox="0 0 17 14" shape-rendering="crispEdges"><path d="M7 3h1v1H7zM9 3h1v1H9zM11 3h1v1h-1zM13 3h1v1h-1zM15 3h1v1h-1zM7 5h1v1H7zM7 7h1v1H7zM7 9h1v1H7zM7 11h1v1H7zM9 12h1v1H9zM11 12h1v1h-1zM13 12h1v1h-1zM15 12h1v1h-1zM15 5h1v1h-1zM15 7h1v1h-1zM15 9h1v1h-1zM15 11h1v1h-1z" fill="#000"/><path d="M8 1h1v1H8zM9 2h1v1H9zM10 1h1v1h-1zM13 1h1v1h-1zM14 2h1v1h-1zM15 1h1v1h-1zM1 7h1v1H1zM1 10h1v1H1zM2 8h1v2H2z" fill="#000"/></svg>
</div></body></html>
